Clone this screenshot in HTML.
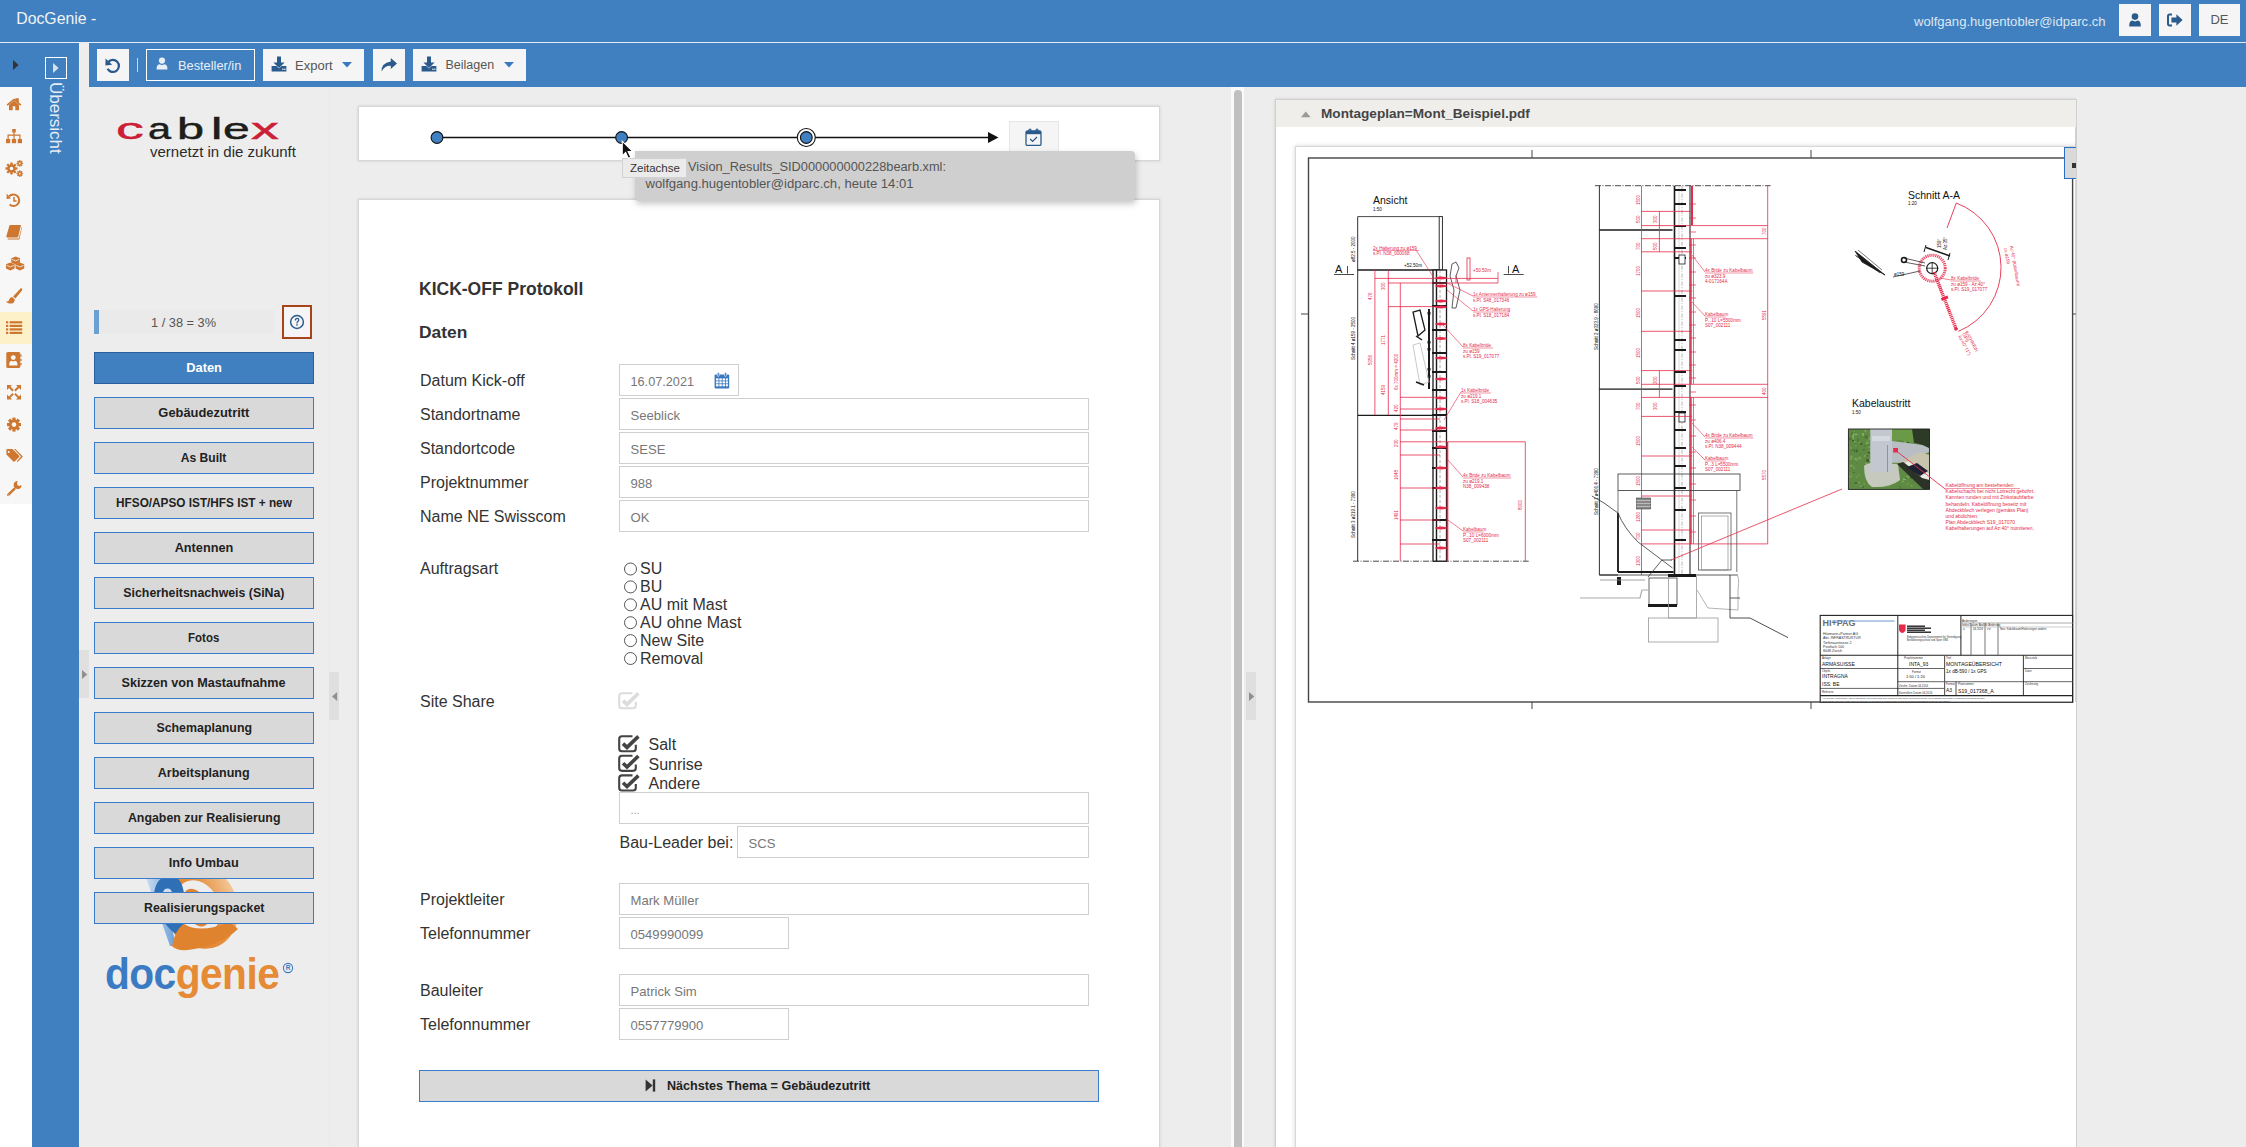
<!DOCTYPE html>
<html><head><meta charset="utf-8">
<style>
*{box-sizing:border-box;margin:0;padding:0}
html,body{width:2246px;height:1147px;overflow:hidden;background:#ededed;font-family:"Liberation Sans",sans-serif;position:relative}
.a{position:absolute}
.blue{background:#4080c0}
.tb{position:absolute;top:49px;height:32px;background:#f5f5f5}
.navbtn{position:absolute;left:94px;width:220px;height:32px;background:#d9d9d9;border:1px solid #3b7bcc;font-weight:bold;font-size:13px;color:#222;text-align:center;line-height:30px;white-space:nowrap}
.lbl{position:absolute;left:420px;font-size:16px;color:#333;white-space:nowrap;line-height:20px}
.inp{position:absolute;left:619px;width:470px;height:32px;border:1px solid #cfcfcf;background:#fff;font-size:13.1px;color:#777;padding-left:10.5px;line-height:34px;white-space:nowrap}
.ic{position:absolute;left:0;width:32px;height:32px}
.ic svg{position:absolute;left:7px;top:8px}
</style></head><body>

<!-- header -->
<div class="a blue" style="left:0;top:0;width:2246px;height:42px"></div>
<div class="a" style="left:16.2px;top:9px;font-size:15.85px;color:#f2f2f2;white-space:nowrap;line-height:20px">DocGenie -</div>
<div class="a" style="left:1914px;top:12.5px;font-size:13.1px;color:#dce7f2;white-space:nowrap;line-height:18px">wolfgang.hugentobler@idparc.ch</div>
<div class="a" style="left:2119px;top:4px;width:32px;height:32px;background:#f5f5f5"></div>
<div class="a" style="left:2159px;top:4px;width:32px;height:32px;background:#f5f5f5"></div>
<div class="a" style="left:2199px;top:4px;width:41px;height:32px;background:#f5f5f5;font-size:13px;color:#555;text-align:center;line-height:32px">DE</div>
<div class="a" style="left:0;top:42px;width:2246px;height:1px;background:#e3ecf6"></div>

<!-- toolbar row -->
<div class="a blue" style="left:0;top:43px;width:32px;height:44px"></div>
<div class="a blue" style="left:89px;top:43px;width:2157px;height:44px"></div>
<!-- sidebar -->
<div class="a blue" style="left:32px;top:43px;width:47px;height:1104px"></div>
<div class="a" style="left:79px;top:43px;width:1px;height:1104px;background:#f4f1ec"></div>
<!-- icon strip -->
<div class="a" style="left:0;top:87px;width:32px;height:417px;background:#f7f7f7"></div>
<div class="a" style="left:0;top:504px;width:32px;height:643px;background:#fff"></div>
<div class="a" style="left:0;top:312px;width:32px;height:32px;background:#fdf1c9"></div>


<!-- toolbar buttons -->
<div class="tb" style="left:97px;width:32px"></div>
<svg class="a" style="left:104px;top:57px" width="18" height="17" viewBox="0 0 18 17"><path d="M4.2 5.2 A6 6 0 1 1 3.6 11.8" fill="none" stroke="#2b5b8c" stroke-width="2.3"/><path d="M1.6 1.6 L8.2 7.8 L1.4 8.6 Z" fill="#2b5b8c"/></svg>
<div class="a" style="left:137px;top:58px;width:1px;height:14px;background:#c9d9ea"></div>
<div class="a" style="left:146px;top:49px;width:109px;height:32px;border:1px solid #fff"></div>
<svg class="a" style="left:156px;top:57px" width="12" height="13" viewBox="0 0 12 13"><circle cx="6" cy="3.6" r="3.1" fill="#e9eff6"/><path d="M0.6 12.6 Q0.4 7.4 3.4 7.2 Q6 8.6 8.6 7.2 Q11.6 7.4 11.4 12.6 Z" fill="#e9eff6"/></svg>
<div class="a" style="left:178px;top:58px;font-size:12.8px;color:#e9eff6;white-space:nowrap;line-height:15px">Besteller/in</div>

<div class="tb" style="left:263px;width:101px"></div>
<svg class="a" style="left:271px;top:56px" width="16" height="16" viewBox="0 0 16 16"><path d="M6 0.5 H10 V6.5 H13.6 L8 12 L2.4 6.5 H6 Z" fill="#2b5b8c"/><path d="M0.6 10 H5.4 L8 12.6 L10.6 10 H15.4 V15.4 H0.6 Z" fill="#2b5b8c"/><rect x="11.2" y="12.6" width="1.3" height="1.3" fill="#f5f5f5"/><rect x="13.2" y="12.6" width="1.3" height="1.3" fill="#f5f5f5"/></svg>
<div class="a" style="left:295px;top:58px;font-size:13px;color:#555;white-space:nowrap;line-height:15px">Export</div>
<svg class="a" style="left:342px;top:62px" width="10" height="6" viewBox="0 0 10 6"><path d="M0 0 H10 L5 5.6 Z" fill="#3a78c0"/></svg>

<div class="tb" style="left:373px;width:32px"></div>
<svg class="a" style="left:380px;top:57px" width="18" height="16" viewBox="0 0 18 16"><path d="M10.8 1 L17 6.6 L10.8 12 V8.8 Q4.6 8.4 1.6 14.6 Q1 6.2 10.8 4.6 Z" fill="#2b5b8c"/></svg>

<div class="tb" style="left:413px;width:113px"></div>
<svg class="a" style="left:421px;top:56px" width="16" height="16" viewBox="0 0 16 16"><path d="M6 0.5 H10 V6.5 H13.6 L8 12 L2.4 6.5 H6 Z" fill="#2b5b8c"/><path d="M0.6 10 H5.4 L8 12.6 L10.6 10 H15.4 V15.4 H0.6 Z" fill="#2b5b8c"/><rect x="11.2" y="12.6" width="1.3" height="1.3" fill="#f5f5f5"/><rect x="13.2" y="12.6" width="1.3" height="1.3" fill="#f5f5f5"/></svg>
<div class="a" style="left:445.5px;top:58px;font-size:12.5px;color:#555;white-space:nowrap;line-height:15px">Beilagen</div>
<svg class="a" style="left:504px;top:62px" width="10" height="6" viewBox="0 0 10 6"><path d="M0 0 H10 L5 5.6 Z" fill="#3a78c0"/></svg>

<!-- header icons -->
<svg class="a" style="left:2129px;top:13px" width="12" height="14" viewBox="0 0 12 14"><circle cx="6" cy="3.6" r="3.3" fill="#2b5b8c"/><path d="M0.2 13.6 Q0 8 3.2 7.6 Q6 9.2 8.8 7.6 Q12 8 11.8 13.6 Z" fill="#2b5b8c"/></svg>
<svg class="a" style="left:2167px;top:13px" width="16" height="14" viewBox="0 0 16 14"><path d="M5 1.5 H2.6 Q1 1.5 1 3.2 V10.8 Q1 12.5 2.6 12.5 H5" fill="none" stroke="#2b5b8c" stroke-width="2"/><path d="M9.4 1.2 L15.6 7 L9.4 12.8 V9.4 H4.4 V4.6 H9.4 Z" fill="#2b5b8c"/></svg>

<!-- sidebar toggles -->
<svg class="a" style="left:13px;top:60px" width="6" height="10" viewBox="0 0 6 10"><path d="M0 0 L5.6 5 L0 10 Z" fill="#333"/></svg>
<div class="a" style="left:45px;top:57px;width:22px;height:22px;border:1px solid #fff"></div>
<svg class="a" style="left:53px;top:63px" width="6" height="10" viewBox="0 0 6 10"><path d="M0 0 L5.6 5 L0 10 Z" fill="#d3e1ef"/></svg>
<div class="a" style="left:48px;top:82px;width:16px;height:74px"><div style="position:absolute;left:0;top:0;writing-mode:vertical-rl;font-size:17px;color:#e6eef6;line-height:15px;white-space:nowrap">Übersicht</div></div>


<svg class="a" style="left:0;top:87px" width="32" height="420" viewBox="0 87 32 420">
<g fill="#cd7730">
<!-- home -->
<path d="M6.6 104.6 L14 98.4 L15.4 99.6 V98.2 H18.8 V102.4 L21.4 104.6 L20.4 105.8 L14 100.5 L7.6 105.8 Z"/>
<path d="M9 104.8 L14 100.8 L19 104.8 V110.2 H15.3 V106.2 H12.7 V110.2 H9 Z"/>
<!-- sitemap -->
<rect x="12.2" y="129" width="3.6" height="3.4"/>
<rect x="6" y="139" width="4.2" height="4.2"/><rect x="11.9" y="139" width="4.2" height="4.2"/><rect x="17.8" y="139" width="4.2" height="4.2"/>
<path d="M13.4 132 H14.6 V134.6 H20.5 V139 H19.3 V135.8 H14.6 V139 H13.4 V135.8 H8.7 V139 H7.5 V134.6 H13.4 Z"/>
<!-- cogs -->
<g transform="translate(11.5,168.5)"><circle r="4.2"/><g><rect x="-1.2" y="-6" width="2.4" height="12"/><rect x="-6" y="-1.2" width="12" height="2.4"/><rect x="-1.2" y="-6" width="2.4" height="12" transform="rotate(45)"/><rect x="-1.2" y="-6" width="2.4" height="12" transform="rotate(-45)"/></g><circle r="1.8" fill="#f8f8f8"/></g>
<g transform="translate(19.8,163.4)"><circle r="2.2"/><rect x="-0.7" y="-3.3" width="1.4" height="6.6"/><rect x="-3.3" y="-0.7" width="6.6" height="1.4"/><rect x="-0.7" y="-3.3" width="1.4" height="6.6" transform="rotate(45)"/><rect x="-0.7" y="-3.3" width="1.4" height="6.6" transform="rotate(-45)"/><circle r="0.9" fill="#f8f8f8"/></g>
<g transform="translate(19.8,173.6)"><circle r="2.2"/><rect x="-0.7" y="-3.3" width="1.4" height="6.6"/><rect x="-3.3" y="-0.7" width="6.6" height="1.4"/><rect x="-0.7" y="-3.3" width="1.4" height="6.6" transform="rotate(45)"/><rect x="-0.7" y="-3.3" width="1.4" height="6.6" transform="rotate(-45)"/><circle r="0.9" fill="#f8f8f8"/></g>
</g>
<g fill="none" stroke="#cd7730">
<!-- history -->
<path d="M9.2 196.2 A5.8 5.8 0 1 1 9.6 204.6" stroke-width="2"/>
<path d="M14 197 V201 H16.6" stroke-width="1.5"/>
</g>
<g fill="#cd7730">
<path d="M6.6 193.6 L11 198.4 L6.6 199 Z"/>
<!-- book -->
<path d="M9.6 225 H21 L18 237.6 H7.4 Q6 237.6 6.4 236 Z"/>
<path d="M7.6 238.6 H18.8 L21.6 227 L22 227.6 L19.4 239.4 H7.8 Z"/>
<rect x="10.8" y="227.6" width="6" height="0.9" fill="#f8f8f8" transform="skewX(-12)" />
<rect x="10.6" y="229.8" width="6" height="0.9" fill="#f8f8f8" transform="skewX(-12)"/>
<!-- cubes -->
<path d="M11.3 258.2 L15.7 256.4 L20 258.2 V262.6 L15.7 264.4 L11.3 262.6 Z"/>
<path d="M6 264.2 L10.3 262.4 L14.6 264.2 V268.6 L10.3 270.4 L6 268.6 Z"/>
<path d="M15.6 264.2 L19.9 262.4 L24.2 264.2 V268.6 L19.9 270.4 L15.6 268.6 Z"/>
<path d="M12 259.4 L15.7 260.9 L19.3 259.4" fill="none" stroke="#f8f8f8" stroke-width="0.8"/>
<path d="M6.7 265.4 L10.3 266.9 L13.9 265.4" fill="none" stroke="#f8f8f8" stroke-width="0.8"/>
<path d="M16.3 265.4 L19.9 266.9 L23.5 265.4" fill="none" stroke="#f8f8f8" stroke-width="0.8"/>
<!-- paint brush -->
<path d="M21 288 Q23 288.6 22 290.6 L15.4 298.6 L13 296.4 Z"/>
<path d="M12.2 297 L14.8 299.4 Q14.6 303.8 9.6 303.6 Q7.4 303.4 6 301.6 Q8.8 301.8 9.2 299.4 Q9.8 297.4 12.2 297 Z"/>
<!-- list -->
<rect x="6" y="321.2" width="2.2" height="2.2"/><rect x="9.6" y="321.2" width="12.6" height="2.2"/>
<rect x="6" y="324.8" width="2.2" height="2.2"/><rect x="9.6" y="324.8" width="12.6" height="2.2"/>
<rect x="6" y="328.3" width="2.2" height="2.2"/><rect x="9.6" y="328.3" width="12.6" height="2.2"/>
<rect x="6" y="331.8" width="2.2" height="2.2"/><rect x="9.6" y="331.8" width="12.6" height="2.2"/>
<!-- address book -->
<rect x="6.3" y="352" width="14" height="16" rx="1.6"/>
<rect x="20.3" y="354.5" width="1.3" height="2.2"/><rect x="20.3" y="358.8" width="1.3" height="2.2"/><rect x="20.3" y="363" width="1.3" height="2.2"/>
<circle cx="13.3" cy="357.6" r="2.4" fill="#f8f8f8"/>
<path d="M9.2 365.6 Q9 361.2 11.4 360.8 Q13.3 361.8 15.2 360.8 Q17.6 361.2 17.4 365.6 Z" fill="#f8f8f8"/>
<!-- expand -->
<path d="M7 385 H12 L10.4 386.6 L13.8 390 L12.4 391.4 L9 388 L7 390 Z"/>
<path d="M21 385 H16 L17.6 386.6 L14.2 390 L15.6 391.4 L19 388 L21 390 Z"/>
<path d="M7 399.4 H12 L10.4 397.8 L13.8 394.4 L12.4 393 L9 396.4 L7 394.4 Z"/>
<path d="M21 399.4 H16 L17.6 397.8 L14.2 394.4 L15.6 393 L19 396.4 L21 394.4 Z"/>
<!-- cog -->
<g transform="translate(14,424.6)"><circle r="5"/><rect x="-1.6" y="-7" width="3.2" height="14"/><rect x="-7" y="-1.6" width="14" height="3.2"/><rect x="-1.6" y="-7" width="3.2" height="14" transform="rotate(45)"/><rect x="-1.6" y="-7" width="3.2" height="14" transform="rotate(-45)"/><circle r="2.3" fill="#f8f8f8"/></g>
<!-- tags -->
<path d="M7.4 449 H12.4 L19.2 455.8 Q19.8 456.4 19.2 457 L14.6 461.6 Q14 462.2 13.4 461.6 L6.4 454.6 V450 Q6.4 449 7.4 449 Z"/>
<path d="M14 449 H15.4 L22.4 456 Q23 456.6 22.4 457.2 L17.6 462 L16.8 461.2 L21 456.6 Z"/>
<circle cx="8.8" cy="452" r="1" fill="#f8f8f8"/>
<!-- wrench -->
<path d="M7.4 494 L14.2 487.2 L16 489 L9.2 495.8 Q8.3 496.6 7.4 495.8 Q6.6 494.9 7.4 494 Z"/>
<path d="M17.6 481 Q14.2 481.4 13.6 484.4 Q13.4 486.4 15 488 Q16.8 489.4 18.8 489 Q21.6 488.2 21.4 485 L19.2 486 L17.2 485 L17.2 482.8 Z"/>
<circle cx="8.3" cy="494.9" r="0.5" fill="#f8f8f8"/>
</g>
</svg>


<!-- nav panel -->
<div class="a" style="left:329px;top:87px;width:1px;height:1060px;background:#e9e9e9"></div>


<!-- cablex logo -->
<div class="a" style="left:116.0px;top:112px;font-size:30px;line-height:34px;color:#cc2036;transform:scaleX(1.85);transform-origin:0 0;-webkit-text-stroke:0.5px #cc2036">c</div>
<div class="a" style="left:148.0px;top:112px;font-size:30px;line-height:34px;color:#1d1d1b;transform:scaleX(1.38);transform-origin:0 0;-webkit-text-stroke:0.5px #1d1d1b">a</div>
<div class="a" style="left:177.0px;top:112px;font-size:30px;line-height:34px;color:#1d1d1b;transform:scaleX(1.62);transform-origin:0 0;-webkit-text-stroke:0.5px #1d1d1b">b</div>
<div class="a" style="left:211.4px;top:112px;font-size:30px;line-height:34px;color:#1d1d1b;transform:scaleX(1.7);transform-origin:0 0;-webkit-text-stroke:0.5px #1d1d1b">l</div>
<div class="a" style="left:222.6px;top:112px;font-size:30px;line-height:34px;color:#1d1d1b;transform:scaleX(1.6);transform-origin:0 0;-webkit-text-stroke:0.5px #1d1d1b">e</div>
<div class="a" style="left:250.6px;top:112px;font-size:30px;line-height:34px;color:#cc2036;transform:scaleX(1.85);transform-origin:0 0;-webkit-text-stroke:0.5px #cc2036">x</div>
<div class="a" style="left:150px;top:143px;font-size:15px;line-height:17px;color:#2b2b2b;white-space:nowrap">vernetzt in die zukunft</div>

<!-- docgenie logo -->
<svg class="a" style="left:130px;top:860px" width="120" height="100" viewBox="130 860 120 100">
<defs><linearGradient id="og" x1="0" x2="1" y1="0" y2="0"><stop offset="0" stop-color="#e0832f"/><stop offset="0.6" stop-color="#e58f3e"/><stop offset="1" stop-color="#f3c796"/></linearGradient>
<linearGradient id="lb" x1="0" x2="1"><stop offset="0" stop-color="#cfe0f3"/><stop offset="1" stop-color="#6a9fd8"/></linearGradient></defs>
<g transform="rotate(-25 200 906)">
<ellipse cx="200" cy="906" rx="37" ry="44" fill="url(#og)"/>
<ellipse cx="197" cy="906" rx="22" ry="28" fill="#eeeeee"/>
<ellipse cx="196" cy="906" rx="12" ry="20" fill="#e0832f"/>
</g>
<path d="M144 872 L160 872 L176 946 L170 946 Z" fill="url(#lb)"/>
<path d="M154 894 Q156 876 170 876 Q182 876 184 894 L184 924 L176 934 Q164 926 160 912 Z" fill="#2f6fb5"/>
<circle cx="167.5" cy="893" r="4.5" fill="#cfe0f3"/>
<path d="M172 946 Q176 928 184 924 Q200 934 230 922 L238 929 Q220 946 188 950 Q176 951 172 946 Z" fill="#e0832f"/>
</svg>
<div class="a" style="left:104.5px;top:948.5px;font-size:44px;line-height:50px;font-weight:bold;white-space:nowrap;transform:scaleX(0.925);transform-origin:0 0;letter-spacing:-0.6px"><span style="color:#3a7bc4">doc</span><span style="color:#e58a35">genie</span></div>
<svg class="a" style="left:282px;top:962px" width="12" height="12" viewBox="0 0 12 12"><circle cx="6" cy="6" r="4.6" fill="none" stroke="#3a7bc4" stroke-width="1.1"/><text x="6" y="8.3" font-size="6.5" font-family="Liberation Sans" font-weight="bold" text-anchor="middle" fill="#3a7bc4">R</text></svg>

<!-- progress -->
<div class="a" style="left:94px;top:310px;width:180px;height:24px;background:#eaeaea"></div>
<div class="a" style="left:94px;top:310px;width:5px;height:24px;background:#6aa0d2"></div>
<div class="a" style="left:151px;top:315px;font-size:12.8px;line-height:16px;color:#555;white-space:nowrap">1 / 38 = 3%</div>
<div class="a" style="left:282px;top:305px;width:30px;height:34px;border:2px solid #a8441a;background:#f5f5f5"></div>
<svg class="a" style="left:289px;top:314px" width="16" height="16" viewBox="0 0 16 16"><circle cx="8" cy="8" r="6.4" fill="none" stroke="#2b5b8c" stroke-width="1.5"/><path d="M5.8 6.4 Q5.8 3.8 8.1 3.8 Q10.4 3.8 10.4 6 Q10.4 7.3 9 8 Q8.6 8.3 8.6 9.4 H7.4 Q7.3 7.6 8.4 7 Q9.2 6.5 9.1 5.9 Q9 5 8 5 Q7.1 5 7.1 6.4 Z" fill="#2b5b8c"/><rect x="7.3" y="10.2" width="1.4" height="1.5" fill="#2b5b8c"/></svg>

<!-- nav buttons -->
<div class="navbtn" style="top:352px;background:#4080c0;border-color:#2a5f9c;color:#fff"><span style="display:inline-block;transform:scaleX(0.986)">Daten</span></div>
<div class="navbtn" style="top:397px"><span style="display:inline-block;transform:scaleX(0.992)">Gebäudezutritt</span></div>
<div class="navbtn" style="top:442px"><span style="display:inline-block;transform:scaleX(0.93)">As Built</span></div>
<div class="navbtn" style="top:487px"><span style="display:inline-block;transform:scaleX(0.906)">HFSO/APSO IST/HFS IST + new</span></div>
<div class="navbtn" style="top:532px"><span style="display:inline-block;transform:scaleX(0.978)">Antennen</span></div>
<div class="navbtn" style="top:577px"><span style="display:inline-block;transform:scaleX(0.949)">Sicherheitsnachweis (SiNa)</span></div>
<div class="navbtn" style="top:622px"><span style="display:inline-block;transform:scaleX(0.88)">Fotos</span></div>
<div class="navbtn" style="top:667px"><span style="display:inline-block;transform:scaleX(0.97)">Skizzen von Mastaufnahme</span></div>
<div class="navbtn" style="top:712px"><span style="display:inline-block;transform:scaleX(0.952)">Schemaplanung</span></div>
<div class="navbtn" style="top:757px"><span style="display:inline-block;transform:scaleX(0.964)">Arbeitsplanung</span></div>
<div class="navbtn" style="top:802px"><span style="display:inline-block;transform:scaleX(0.951)">Angaben zur Realisierung</span></div>
<div class="navbtn" style="top:847px"><span style="display:inline-block;transform:scaleX(0.978)">Info Umbau</span></div>
<div class="navbtn" style="top:892px"><span style="display:inline-block;transform:scaleX(0.952)">Realisierungspacket</span></div>


<!-- toggle tabs -->
<div class="a" style="left:79px;top:650px;width:10px;height:48px;background:#e0e0e0"></div>
<svg class="a" style="left:82px;top:670px" width="6" height="9" viewBox="0 0 6 9"><path d="M0 0 L5.2 4.5 L0 9 Z" fill="#8f8f8f"/></svg>
<div class="a" style="left:329px;top:672px;width:10px;height:48px;background:#dfdfdf"></div>
<svg class="a" style="left:332px;top:692px" width="6" height="9" viewBox="0 0 6 9"><path d="M5.2 0 L0 4.5 L5.2 9 Z" fill="#8f8f8f"/></svg>
<div class="a" style="left:1246px;top:672px;width:10px;height:48px;background:#dfdfdf"></div>
<svg class="a" style="left:1249px;top:692px" width="6" height="9" viewBox="0 0 6 9"><path d="M0 0 L5.2 4.5 L0 9 Z" fill="#8f8f8f"/></svg>

<!-- doc cards -->
<div class="a" style="left:358px;top:106px;width:802px;height:55px;background:#fff;border:1px solid #d6d6d6;box-shadow:0 0 3px rgba(0,0,0,.12)"></div>
<div class="a" style="left:358px;top:199px;width:802px;height:960px;background:#fff;border:1px solid #d6d6d6;box-shadow:0 0 3px rgba(0,0,0,.12)"></div>


<!-- timeline -->
<svg class="a" style="left:420px;top:120px" width="600" height="36" viewBox="420 120 600 36">
<line x1="437" y1="137.5" x2="990" y2="137.5" stroke="#111" stroke-width="1.3"/>
<path d="M988 132 L998.5 137.5 L988 143 Z" fill="#111"/>
<circle cx="437" cy="137.5" r="5.9" fill="#4080c0" stroke="#111" stroke-width="1.1"/>
<circle cx="621.6" cy="137.5" r="5.9" fill="#4080c0" stroke="#111" stroke-width="1.1"/>
<circle cx="806.3" cy="137.5" r="9" fill="#fff" stroke="#111" stroke-width="1.1"/>
<circle cx="806.3" cy="137.5" r="5.9" fill="#4080c0" stroke="#111" stroke-width="1.1"/>
</svg>
<div class="a" style="left:1009px;top:121px;width:50px;height:34px;background:#f5f5f5;border:1px solid #e6e6e6"></div>
<svg class="a" style="left:1025px;top:128px" width="17" height="18" viewBox="0 0 17 18"><path d="M2.5 3 H14.5 Q16 3 16 4.5 V16 Q16 17.5 14.5 17.5 H2.5 Q1 17.5 1 16 V4.5 Q1 3 2.5 3 Z" fill="none" stroke="#2b5b8c" stroke-width="1.3"/><rect x="1" y="3" width="15" height="3.2" fill="#2b5b8c"/><rect x="4" y="1" width="2" height="4" rx="1" fill="none" stroke="#2b5b8c" stroke-width="1.1"/><rect x="11" y="1" width="2" height="4" rx="1" fill="none" stroke="#2b5b8c" stroke-width="1.1"/><path d="M5.2 11 L7.6 13.4 L12 9" fill="none" stroke="#2b5b8c" stroke-width="1.3"/></svg>

<!-- tooltip -->
<div class="a" style="left:635px;top:151px;width:500px;height:50px;background:#cfcfcf;border-radius:0 4px 4px 4px;box-shadow:1px 3px 6px rgba(0,0,0,.22)"></div>
<div class="a" style="left:688px;top:158px;font-size:12.8px;line-height:17px;color:#555;white-space:nowrap">Vision_Results_SID000000000228bearb.xml:</div><div class="a" style="left:645.5px;top:175px;font-size:13.1px;line-height:17px;color:#555;white-space:nowrap">wolfgang.hugentobler@idparc.ch, heute 14:01</div>
<div class="a" style="left:622px;top:158px;width:65px;height:20px;background:#ebebeb;border:1px solid #d2d2d2;font-size:11.5px;line-height:18px;color:#333;padding-left:7px;white-space:nowrap">Zeitachse</div>
<svg class="a" style="left:618px;top:138px" width="17" height="22" viewBox="0 0 14 18"><path d="M3.5 2.6 V14.6 L6.3 11.9 L8.5 16.6 L10.5 15.7 L8.3 11.1 L12.2 11.1 Z" fill="#111" stroke="#fff" stroke-width="0.9"/></svg>

<!-- form -->
<div class="a" style="left:419px;top:276.5px;font-size:17.5px;font-weight:bold;color:#333;line-height:24px;white-space:nowrap">KICK-OFF Protokoll</div>
<div class="a" style="left:419px;top:320px;font-size:17.4px;font-weight:bold;color:#333;line-height:24px;white-space:nowrap">Daten</div>

<div class="lbl" style="top:371px">Datum Kick-off</div>
<div class="inp" style="top:364px;width:120px;font-size:12.7px">16.07.2021</div>
<svg class="a" style="left:714px;top:372px" width="16" height="17" viewBox="0 0 16 17"><rect x="0.6" y="2.6" width="14.6" height="13.8" rx="1" fill="#3a78c0"/><g fill="#fff"><rect x="2" y="6.4" width="2.5" height="2.1"/><rect x="5.3" y="6.4" width="2.5" height="2.1"/><rect x="8.6" y="6.4" width="2.5" height="2.1"/><rect x="11.9" y="6.4" width="2" height="2.1"/><rect x="2" y="9.3" width="2.5" height="2.1"/><rect x="5.3" y="9.3" width="2.5" height="2.1"/><rect x="8.6" y="9.3" width="2.5" height="2.1"/><rect x="11.9" y="9.3" width="2" height="2.1"/><rect x="2" y="12.2" width="2.5" height="2.1"/><rect x="5.3" y="12.2" width="2.5" height="2.1"/><rect x="8.6" y="12.2" width="2.5" height="2.1"/><rect x="11.9" y="12.2" width="2" height="2.1"/></g><rect x="3.4" y="0.4" width="1.8" height="4" rx="0.9" fill="#3a78c0" stroke="#fff" stroke-width="0.6"/><rect x="10.6" y="0.4" width="1.8" height="4" rx="0.9" fill="#3a78c0" stroke="#fff" stroke-width="0.6"/></svg>

<div class="lbl" style="top:405px">Standortname</div>
<div class="inp" style="top:398px">Seeblick</div>
<div class="lbl" style="top:439px">Standortcode</div>
<div class="inp" style="top:432px">SESE</div>
<div class="lbl" style="top:473px">Projektnummer</div>
<div class="inp" style="top:466px">988</div>
<div class="lbl" style="top:507px">Name NE Swisscom</div>
<div class="inp" style="top:500px">OK</div>

<div class="lbl" style="top:559px">Auftragsart</div>
<div class="a" style="left:640px;top:560px;font-size:16px;line-height:17.9px;color:#333;white-space:nowrap">SU<br>BU<br>AU mit Mast<br>AU ohne Mast<br>New Site<br>Removal</div>
<svg class="a" style="left:622px;top:560px" width="17" height="108" viewBox="622 560 17 108">
<g fill="#fff" stroke="#555" stroke-width="1">
<circle cx="630.5" cy="569" r="6"/><circle cx="630.5" cy="586.9" r="6"/><circle cx="630.5" cy="604.8" r="6"/><circle cx="630.5" cy="622.7" r="6"/><circle cx="630.5" cy="640.6" r="6"/><circle cx="630.5" cy="658.5" r="6"/>
</g></svg>

<div class="lbl" style="top:692px">Site Share</div>
<svg class="a" style="left:617px;top:690px" width="26" height="21" viewBox="0 0 26 21"><g fill="none" stroke="#dcdcdc"><path d="M15.5 3.2 H5 Q2.2 3.2 2.2 6 V15.5 Q2.2 18.3 5 18.3 H16 Q18.8 18.3 18.8 15.5 V11.8" stroke-width="2.1"/><path d="M6 10.6 L10 14.4 L21.4 3.4" stroke-width="3.6"/></g></svg>

<svg class="a" style="left:617px;top:733px" width="26" height="60" viewBox="0 0 26 60"><g fill="none" stroke="#444"><g transform="translate(0,0)"><path d="M15.5 3.2 H5 Q2.2 3.2 2.2 6 V15.5 Q2.2 18.3 5 18.3 H16 Q18.8 18.3 18.8 15.5 V11.8" stroke-width="2.1"/><path d="M6 10.6 L10 14.4 L21.4 3.4" stroke-width="3.6"/></g><g transform="translate(0,19.6)"><path d="M15.5 3.2 H5 Q2.2 3.2 2.2 6 V15.5 Q2.2 18.3 5 18.3 H16 Q18.8 18.3 18.8 15.5 V11.8" stroke-width="2.1"/><path d="M6 10.6 L10 14.4 L21.4 3.4" stroke-width="3.6"/></g><g transform="translate(0,39.2)"><path d="M15.5 3.2 H5 Q2.2 3.2 2.2 6 V15.5 Q2.2 18.3 5 18.3 H16 Q18.8 18.3 18.8 15.5 V11.8" stroke-width="2.1"/><path d="M6 10.6 L10 14.4 L21.4 3.4" stroke-width="3.6"/></g></g></svg>
<div class="a" style="left:648.5px;top:735px;font-size:16px;line-height:19.5px;color:#333;white-space:nowrap">Salt<br>Sunrise<br>Andere</div>
<div class="inp" style="top:792px;height:32px;font-size:11px;color:#999">...</div>
<div class="a" style="left:619.5px;top:834px;font-size:16px;line-height:18px;color:#333;white-space:nowrap">Bau-Leader bei:</div>
<div class="inp" style="left:737px;top:826px;width:352px">SCS</div>

<div class="lbl" style="top:890px">Projektleiter</div>
<div class="inp" style="top:883px">Mark Müller</div>
<div class="lbl" style="top:924px">Telefonnummer</div>
<div class="inp" style="top:917px;width:170px">0549990099</div>
<div class="lbl" style="top:981px">Bauleiter</div>
<div class="inp" style="top:974px">Patrick Sim</div>
<div class="lbl" style="top:1015px">Telefonnummer</div>
<div class="inp" style="top:1008px;width:170px">0557779900</div>

<div class="a" style="left:419px;top:1070px;width:680px;height:32px;background:#d9d9d9;border:1px solid #3b7bcc"></div>
<svg class="a" style="left:645px;top:1079px" width="11" height="13" viewBox="0 0 11 13"><path d="M0.6 0.4 L7.6 6.5 L0.6 12.6 Z" fill="#333"/><rect x="7.8" y="0.4" width="2.4" height="12.2" fill="#333"/></svg>
<div class="a" style="left:667px;top:1078px;font-size:12.6px;font-weight:bold;color:#222;line-height:16px;white-space:nowrap">Nächstes Thema = Gebäudezutritt</div>

<!-- splitter -->
<div class="a" style="left:1231px;top:87px;width:13px;height:1060px;background:#fafafa"></div>
<div class="a" style="left:1234px;top:90px;width:8px;height:1057px;background:#c0c0c0;border-radius:4px 4px 0 0"></div>

<!-- pdf panel -->
<div class="a" style="left:1275px;top:99px;width:801px;height:1060px;background:#fff;border:1px solid #d0d0d0;box-shadow:0 0 3px rgba(0,0,0,.15)"></div>
<div class="a" style="left:1276px;top:100px;width:800px;height:27px;background:#efeeea"></div>


<div class="a" style="left:1321px;top:105px;font-size:13.6px;font-weight:bold;color:#444;line-height:18px;white-space:nowrap">Montageplan=Mont_Beispiel.pdf</div>
<svg class="a" style="left:1301px;top:111px" width="10" height="7" viewBox="0 0 10 7"><path d="M0 6.2 L4.8 0.6 L9.6 6.2 Z" fill="#999"/></svg>
<!-- pdf page -->
<div class="a" style="left:1295px;top:146px;width:790px;height:1010px;background:#fff;border:1px solid #d8d8d8;box-shadow:0 0 4px rgba(0,0,0,.18)"></div>
<svg class="a" style="left:1296px;top:146px" width="780" height="1001" viewBox="1296 146 780 1001" font-family="Liberation Sans">
<rect x="1308.5" y="158" width="764.1" height="544" fill="none" stroke="#444" stroke-width="1.4" />
<line x1="1532" y1="150" x2="1532" y2="158" stroke="#444" stroke-width="1" />
<line x1="1532" y1="702" x2="1532" y2="709" stroke="#444" stroke-width="1" />
<line x1="1811" y1="150" x2="1811" y2="158" stroke="#444" stroke-width="1" />
<line x1="1811" y1="702" x2="1811" y2="709" stroke="#444" stroke-width="1" />
<line x1="1301" y1="314" x2="1308.5" y2="314" stroke="#444" stroke-width="1" />
<line x1="2072.6" y1="314" x2="2076" y2="314" stroke="#444" stroke-width="1" />
<line x1="2076" y1="180" x2="2076" y2="702" stroke="#999" stroke-width="0.8" />
<text x="1373" y="204" font-size="10.5" fill="#111" >Ansicht</text>
<text x="1373" y="211" font-size="4.5" fill="#111" >1:50</text>
<line x1="1357.7" y1="216.6" x2="1439" y2="216.6" stroke="#1a1a1a" stroke-width="0.8" />
<line x1="1357.7" y1="216.6" x2="1357.7" y2="561" stroke="#1a1a1a" stroke-width="0.9" />
<line x1="1357.7" y1="270" x2="1439" y2="270" stroke="#1a1a1a" stroke-width="1.6" />
<line x1="1357.7" y1="415.3" x2="1433.8" y2="415.3" stroke="#1a1a1a" stroke-width="1.2" />
<line x1="1353" y1="561.2" x2="1528.7" y2="561.2" stroke="#1a1a1a" stroke-width="0.8" stroke-dasharray="6 1.5 1 1.5"/>
<text x="1335" y="273" font-size="11" fill="#111" >A</text>
<line x1="1334" y1="274.5" x2="1354" y2="274.5" stroke="#1a1a1a" stroke-width="0.8" />
<line x1="1347.5" y1="266" x2="1347.5" y2="273.5" stroke="#1a1a1a" stroke-width="0.8" />
<text x="1512" y="273" font-size="11" fill="#111" >A</text>
<line x1="1503.7" y1="274.5" x2="1523.7" y2="274.5" stroke="#1a1a1a" stroke-width="0.8" />
<line x1="1508.5" y1="266" x2="1508.5" y2="273.5" stroke="#1a1a1a" stroke-width="0.8" />
<rect x="1439.2" y="216.6" width="3.2" height="53.4" fill="#fff" stroke="#1a1a1a" stroke-width="0.9" />
<rect x="1433" y="270" width="13.5" height="291.2" fill="#fff" stroke="#1a1a1a" stroke-width="1.3" />
<line x1="1436.5" y1="270" x2="1436.5" y2="561" stroke="#1a1a1a" stroke-width="1.4" />
<line x1="1440" y1="270" x2="1440" y2="561" stroke="#555" stroke-width="0.5" stroke-dasharray="3 2"/>
<rect x="1432" y="282" width="14" height="2" fill="#1a1a1a" stroke="none" stroke-width="0" />
<rect x="1432" y="305" width="14" height="2" fill="#1a1a1a" stroke="none" stroke-width="0" />
<rect x="1432" y="329" width="14" height="2" fill="#1a1a1a" stroke="none" stroke-width="0" />
<rect x="1432" y="352" width="14" height="2" fill="#1a1a1a" stroke="none" stroke-width="0" />
<rect x="1432" y="371" width="14" height="2" fill="#1a1a1a" stroke="none" stroke-width="0" />
<rect x="1432" y="389" width="14" height="2" fill="#1a1a1a" stroke="none" stroke-width="0" />
<rect x="1432" y="414" width="14" height="2" fill="#1a1a1a" stroke="none" stroke-width="0" />
<rect x="1432" y="430" width="14" height="2" fill="#1a1a1a" stroke="none" stroke-width="0" />
<rect x="1432" y="447" width="14" height="2" fill="#1a1a1a" stroke="none" stroke-width="0" />
<rect x="1432" y="467" width="14" height="2" fill="#1a1a1a" stroke="none" stroke-width="0" />
<rect x="1432" y="487" width="14" height="2" fill="#1a1a1a" stroke="none" stroke-width="0" />
<rect x="1432" y="519" width="14" height="2" fill="#1a1a1a" stroke="none" stroke-width="0" />
<rect x="1432" y="539" width="14" height="2" fill="#1a1a1a" stroke="none" stroke-width="0" />
<ellipse cx="1441" cy="278" rx="6" ry="1.4" fill="#e62a4a"/>
<ellipse cx="1441" cy="286" rx="6" ry="1.4" fill="#e62a4a"/>
<ellipse cx="1441" cy="301" rx="6" ry="1.4" fill="#e62a4a"/>
<ellipse cx="1441" cy="307" rx="6" ry="1.4" fill="#e62a4a"/>
<ellipse cx="1441" cy="324" rx="6" ry="1.4" fill="#e62a4a"/>
<ellipse cx="1441" cy="338.5" rx="6" ry="1.4" fill="#e62a4a"/>
<ellipse cx="1441" cy="358" rx="6" ry="1.4" fill="#e62a4a"/>
<ellipse cx="1441" cy="379" rx="6" ry="1.4" fill="#e62a4a"/>
<ellipse cx="1441" cy="398" rx="6" ry="1.4" fill="#e62a4a"/>
<ellipse cx="1441" cy="409" rx="6" ry="1.4" fill="#e62a4a"/>
<ellipse cx="1441" cy="428" rx="6" ry="1.4" fill="#e62a4a"/>
<ellipse cx="1441" cy="447" rx="6" ry="1.4" fill="#e62a4a"/>
<ellipse cx="1441" cy="468" rx="6" ry="1.4" fill="#e62a4a"/>
<ellipse cx="1441" cy="488" rx="6" ry="1.4" fill="#e62a4a"/>
<ellipse cx="1441" cy="508" rx="6" ry="1.4" fill="#e62a4a"/>
<ellipse cx="1441" cy="528" rx="6" ry="1.4" fill="#e62a4a"/>
<ellipse cx="1441" cy="548" rx="6" ry="1.4" fill="#e62a4a"/>
<line x1="1447.5" y1="442" x2="1447.5" y2="561" stroke="#e62a4a" stroke-width="1.6" />
<path d="M1413 312 L1420 310 L1425 330 L1418 336 Z" fill="#fff" stroke="#1a1a1a" stroke-width="1.3"/>
<line x1="1429" y1="309" x2="1429" y2="389" stroke="#1a1a1a" stroke-width="2" />
<rect x="1427.5" y="312" width="3" height="2.5" fill="#1a1a1a" stroke="none" stroke-width="0" />
<rect x="1427.5" y="341" width="3" height="2.5" fill="#1a1a1a" stroke="none" stroke-width="0" />
<rect x="1427.5" y="348" width="3" height="2.5" fill="#1a1a1a" stroke="none" stroke-width="0" />
<rect x="1427.5" y="368" width="3" height="2.5" fill="#1a1a1a" stroke="none" stroke-width="0" />
<rect x="1427.5" y="375" width="3" height="2.5" fill="#1a1a1a" stroke="none" stroke-width="0" />
<path d="M1413 345 L1420 343 L1429 382 L1420 385 Z" fill="none" stroke="#bbb" stroke-width="0.8"/>
<line x1="1416" y1="336" x2="1422" y2="340" stroke="#1a1a1a" stroke-width="1.5" />
<line x1="1416" y1="382" x2="1424" y2="385" stroke="#1a1a1a" stroke-width="1.5" />
<path d="M1452 264 L1456 262 L1459 268 L1456 276 L1460 290 L1456 308 L1452 308 L1454 290 L1450 276 Z" fill="#fff" stroke="#333" stroke-width="0.8"/>
<rect x="1467" y="258" width="3" height="22" fill="#fff" stroke="#e62a4a" stroke-width="0.8" />
<line x1="1374.9" y1="270" x2="1374.9" y2="415" stroke="#e62a4a" stroke-width="0.8" />
<line x1="1388.3" y1="270" x2="1388.3" y2="415" stroke="#e62a4a" stroke-width="0.8" />
<line x1="1400.3" y1="283" x2="1400.3" y2="561" stroke="#e62a4a" stroke-width="0.8" />
<line x1="1456" y1="275" x2="1456" y2="283" stroke="#e62a4a" stroke-width="0.7" />
<line x1="1498" y1="272" x2="1498" y2="283" stroke="#e62a4a" stroke-width="0.7" />
<line x1="1374.9" y1="278.4" x2="1498" y2="278.4" stroke="#e62a4a" stroke-width="0.8" />
<line x1="1388" y1="283" x2="1498" y2="283" stroke="#e62a4a" stroke-width="0.8" />
<line x1="1388" y1="306.6" x2="1440" y2="306.6" stroke="#e62a4a" stroke-width="0.8" />
<line x1="1400" y1="397.3" x2="1440" y2="397.3" stroke="#e62a4a" stroke-width="0.8" />
<line x1="1400" y1="409" x2="1440" y2="409" stroke="#e62a4a" stroke-width="0.8" />
<line x1="1400" y1="419" x2="1440" y2="419" stroke="#e62a4a" stroke-width="0.8" />
<line x1="1400" y1="430" x2="1440" y2="430" stroke="#e62a4a" stroke-width="0.8" />
<line x1="1400" y1="441.8" x2="1525.3" y2="441.8" stroke="#e62a4a" stroke-width="0.8" />
<line x1="1400" y1="455" x2="1440" y2="455" stroke="#e62a4a" stroke-width="0.8" />
<line x1="1400" y1="488" x2="1440" y2="488" stroke="#e62a4a" stroke-width="0.8" />
<line x1="1400" y1="520" x2="1440" y2="520" stroke="#e62a4a" stroke-width="0.8" />
<line x1="1400" y1="544" x2="1440" y2="544" stroke="#e62a4a" stroke-width="0.8" />
<line x1="1525.3" y1="441.8" x2="1525.3" y2="561.2" stroke="#e62a4a" stroke-width="0.8" />
<text x="1372" y="300" font-size="4.5" fill="#e62a4a" transform="rotate(-90 1372 300)">476</text>
<text x="1385" y="290" font-size="4.5" fill="#e62a4a" transform="rotate(-90 1385 290)">300</text>
<text x="1385" y="345" font-size="4.5" fill="#e62a4a" transform="rotate(-90 1385 345)">1771</text>
<text x="1372" y="365" font-size="4.5" fill="#e62a4a" transform="rotate(-90 1372 365)">5056</text>
<text x="1385" y="395" font-size="4.5" fill="#e62a4a" transform="rotate(-90 1385 395)">4159</text>
<text x="1398" y="390" font-size="4.5" fill="#e62a4a" transform="rotate(-90 1398 390)">6x 700mm = 4200</text>
<text x="1398" y="412" font-size="4.5" fill="#e62a4a" transform="rotate(-90 1398 412)">420</text>
<text x="1398" y="430" font-size="4.5" fill="#e62a4a" transform="rotate(-90 1398 430)">479</text>
<text x="1398" y="447" font-size="4.5" fill="#e62a4a" transform="rotate(-90 1398 447)">230</text>
<text x="1398" y="480" font-size="4.5" fill="#e62a4a" transform="rotate(-90 1398 480)">1648</text>
<text x="1398" y="520" font-size="4.5" fill="#e62a4a" transform="rotate(-90 1398 520)">1491</text>
<text x="1522" y="510" font-size="4.5" fill="#e62a4a" transform="rotate(-90 1522 510)">8000</text>
<text x="1355" y="262" font-size="4.5" fill="#111" transform="rotate(-90 1355 262)">ø82.5 - 2000</text>
<text x="1355" y="360" font-size="4.5" fill="#111" transform="rotate(-90 1355 360)">Schnitt 4 ø159 - 2500</text>
<text x="1355" y="538" font-size="4.5" fill="#111" transform="rotate(-90 1355 538)">Schnitt 3 ø219.1 - 7390</text>
<text x="1373" y="249.5" font-size="4.6" fill="#e62a4a" >2x Halterung zu ø159</text>
<text x="1373" y="255.1" font-size="4.6" fill="#e62a4a" >s.Pl. N38_000068</text>
<line x1="1373" y1="250.5" x2="1419.0" y2="250.5" stroke="#e62a4a" stroke-width="0.5" />
<line x1="1416" y1="250" x2="1434" y2="278" stroke="#e62a4a" stroke-width="0.6" />
<text x="1473" y="296.0" font-size="4.6" fill="#e62a4a" >1x Antennenhalterung zu ø159</text>
<text x="1473" y="301.6" font-size="4.6" fill="#e62a4a" >s.Pl. S48_017346</text>
<line x1="1473" y1="297" x2="1537.4" y2="297" stroke="#e62a4a" stroke-width="0.5" />
<line x1="1447" y1="283" x2="1473" y2="296" stroke="#e62a4a" stroke-width="0.6" />
<text x="1473" y="311.0" font-size="4.6" fill="#e62a4a" >1x GPS-Halterung</text>
<text x="1473" y="316.6" font-size="4.6" fill="#e62a4a" >s.Pl. S18_017184</text>
<line x1="1473" y1="312" x2="1509.8" y2="312" stroke="#e62a4a" stroke-width="0.5" />
<line x1="1447" y1="290" x2="1473" y2="311" stroke="#e62a4a" stroke-width="0.6" />
<text x="1463" y="347.0" font-size="4.6" fill="#e62a4a" >8x Kabelbride</text>
<text x="1463" y="352.6" font-size="4.6" fill="#e62a4a" >zu ø159</text>
<text x="1463" y="358.2" font-size="4.6" fill="#e62a4a" >s.Pl. S19_017077</text>
<line x1="1463" y1="348" x2="1492.9" y2="348" stroke="#e62a4a" stroke-width="0.5" />
<line x1="1443" y1="325" x2="1463" y2="347" stroke="#e62a4a" stroke-width="0.6" />
<text x="1461" y="392.0" font-size="4.6" fill="#e62a4a" >1x Kabelbride</text>
<text x="1461" y="397.6" font-size="4.6" fill="#e62a4a" >zu ø219.1</text>
<text x="1461" y="403.2" font-size="4.6" fill="#e62a4a" >s.Pl. S18_004635</text>
<line x1="1461" y1="393" x2="1490.9" y2="393" stroke="#e62a4a" stroke-width="0.5" />
<line x1="1444" y1="420" x2="1461" y2="392" stroke="#e62a4a" stroke-width="0.6" />
<text x="1404" y="267" font-size="4.6" fill="#111" >+52.50m</text>
<text x="1473" y="272" font-size="4.6" fill="#e62a4a" >+50.50m</text>
<text x="1463" y="477.0" font-size="4.6" fill="#e62a4a" >4x Bride zu Kabelbaum</text>
<text x="1463" y="482.6" font-size="4.6" fill="#e62a4a" >zu ø219.1</text>
<text x="1463" y="488.2" font-size="4.6" fill="#e62a4a" >N38_009438</text>
<line x1="1463" y1="478" x2="1511.3" y2="478" stroke="#e62a4a" stroke-width="0.5" />
<line x1="1448" y1="460" x2="1463" y2="477" stroke="#e62a4a" stroke-width="0.6" />
<text x="1463" y="531.0" font-size="4.6" fill="#e62a4a" >Kabelbaum</text>
<text x="1463" y="536.6" font-size="4.6" fill="#e62a4a" >P...10 L=6000mm</text>
<text x="1463" y="542.2" font-size="4.6" fill="#e62a4a" >S07_002111</text>
<line x1="1463" y1="532" x2="1483.7" y2="532" stroke="#e62a4a" stroke-width="0.5" />
<line x1="1448" y1="520" x2="1463" y2="531" stroke="#e62a4a" stroke-width="0.6" />
<line x1="1595" y1="185.7" x2="1770.6" y2="185.7" stroke="#1a1a1a" stroke-width="0.8" stroke-dasharray="6 1.5 1 1.5"/>
<line x1="1599.4" y1="185.7" x2="1599.4" y2="575" stroke="#1a1a1a" stroke-width="0.9" />
<line x1="1599.4" y1="230" x2="1672.5" y2="230" stroke="#1a1a1a" stroke-width="1.3" />
<line x1="1599.4" y1="389.1" x2="1672.5" y2="389.1" stroke="#1a1a1a" stroke-width="1.3" />
<line x1="1599.4" y1="575" x2="1618" y2="575" stroke="#1a1a1a" stroke-width="1" />
<line x1="1674.5" y1="185.7" x2="1674.5" y2="575" stroke="#1a1a1a" stroke-width="1.6" />
<line x1="1690" y1="185.7" x2="1690" y2="575" stroke="#1a1a1a" stroke-width="1" />
<line x1="1682" y1="185.7" x2="1682" y2="575" stroke="#666" stroke-width="0.5" stroke-dasharray="4 1.5 1 1.5"/>
<line x1="1679" y1="185.7" x2="1679" y2="575" stroke="#999" stroke-width="0.4" />
<rect x="1674" y="189" width="12" height="2" fill="#1a1a1a" stroke="none" stroke-width="0" />
<rect x="1674" y="203" width="12" height="2" fill="#1a1a1a" stroke="none" stroke-width="0" />
<rect x="1674" y="225" width="12" height="2" fill="#1a1a1a" stroke="none" stroke-width="0" />
<rect x="1674" y="247" width="12" height="2" fill="#1a1a1a" stroke="none" stroke-width="0" />
<rect x="1674" y="257" width="12" height="2" fill="#1a1a1a" stroke="none" stroke-width="0" />
<rect x="1674" y="295" width="12" height="2" fill="#1a1a1a" stroke="none" stroke-width="0" />
<rect x="1674" y="339" width="12" height="2" fill="#1a1a1a" stroke="none" stroke-width="0" />
<rect x="1674" y="349" width="12" height="2" fill="#1a1a1a" stroke="none" stroke-width="0" />
<rect x="1674" y="371" width="12" height="2" fill="#1a1a1a" stroke="none" stroke-width="0" />
<rect x="1674" y="385" width="12" height="2" fill="#1a1a1a" stroke="none" stroke-width="0" />
<rect x="1674" y="411" width="12" height="2" fill="#1a1a1a" stroke="none" stroke-width="0" />
<rect x="1674" y="429" width="12" height="2" fill="#1a1a1a" stroke="none" stroke-width="0" />
<rect x="1674" y="447" width="12" height="2" fill="#1a1a1a" stroke="none" stroke-width="0" />
<rect x="1674" y="465" width="12" height="2" fill="#1a1a1a" stroke="none" stroke-width="0" />
<rect x="1674" y="487" width="12" height="2" fill="#1a1a1a" stroke="none" stroke-width="0" />
<rect x="1674" y="509" width="12" height="2" fill="#1a1a1a" stroke="none" stroke-width="0" />
<rect x="1674" y="539" width="12" height="2" fill="#1a1a1a" stroke="none" stroke-width="0" />
<rect x="1679" y="255" width="6" height="9" fill="#fff" stroke="#1a1a1a" stroke-width="0.8" />
<rect x="1679" y="413" width="6" height="9" fill="#fff" stroke="#1a1a1a" stroke-width="0.8" />
<line x1="1692" y1="185.7" x2="1692" y2="225" stroke="#e62a4a" stroke-width="2" />
<line x1="1691" y1="238.7" x2="1691" y2="384" stroke="#e62a4a" stroke-width="1.4" />
<line x1="1693.5" y1="238.7" x2="1693.5" y2="384" stroke="#e62a4a" stroke-width="0.7" />
<line x1="1691" y1="397" x2="1691" y2="543.9" stroke="#e62a4a" stroke-width="1.4" />
<line x1="1693.5" y1="397" x2="1693.5" y2="543.9" stroke="#e62a4a" stroke-width="0.7" />
<line x1="1641.5" y1="185.7" x2="1641.5" y2="575" stroke="#e62a4a" stroke-width="0.8" />
<line x1="1659.4" y1="211.4" x2="1659.4" y2="251.8" stroke="#e62a4a" stroke-width="0.8" />
<line x1="1659.4" y1="370.6" x2="1659.4" y2="397.4" stroke="#e62a4a" stroke-width="0.8" />
<line x1="1767.7" y1="185.7" x2="1767.7" y2="543.9" stroke="#e62a4a" stroke-width="0.8" />
<line x1="1641.5" y1="211.4" x2="1692" y2="211.4" stroke="#e62a4a" stroke-width="0.8" />
<line x1="1641.5" y1="225.6" x2="1692" y2="225.6" stroke="#e62a4a" stroke-width="0.8" />
<line x1="1641.5" y1="238.7" x2="1692" y2="238.7" stroke="#e62a4a" stroke-width="0.8" />
<line x1="1641.5" y1="251.8" x2="1692" y2="251.8" stroke="#e62a4a" stroke-width="0.8" />
<line x1="1641.5" y1="291" x2="1692" y2="291" stroke="#e62a4a" stroke-width="0.8" />
<line x1="1641.5" y1="331.3" x2="1692" y2="331.3" stroke="#e62a4a" stroke-width="0.8" />
<line x1="1641.5" y1="370.6" x2="1692" y2="370.6" stroke="#e62a4a" stroke-width="0.8" />
<line x1="1641.5" y1="384.3" x2="1692" y2="384.3" stroke="#e62a4a" stroke-width="0.8" />
<line x1="1641.5" y1="397.4" x2="1692" y2="397.4" stroke="#e62a4a" stroke-width="0.8" />
<line x1="1641.5" y1="416.4" x2="1692" y2="416.4" stroke="#e62a4a" stroke-width="0.8" />
<line x1="1641.5" y1="456" x2="1692" y2="456" stroke="#e62a4a" stroke-width="0.8" />
<line x1="1641.5" y1="496" x2="1692" y2="496" stroke="#e62a4a" stroke-width="0.8" />
<line x1="1641.5" y1="530" x2="1692" y2="530" stroke="#e62a4a" stroke-width="0.8" />
<line x1="1641.5" y1="543.9" x2="1692" y2="543.9" stroke="#e62a4a" stroke-width="0.8" />
<line x1="1692" y1="225.6" x2="1767.7" y2="225.6" stroke="#e62a4a" stroke-width="0.8" />
<line x1="1692" y1="238.7" x2="1767.7" y2="238.7" stroke="#e62a4a" stroke-width="0.8" />
<line x1="1692" y1="384.3" x2="1767.7" y2="384.3" stroke="#e62a4a" stroke-width="0.8" />
<line x1="1692" y1="397.4" x2="1767.7" y2="397.4" stroke="#e62a4a" stroke-width="0.8" />
<line x1="1692" y1="543.9" x2="1767.7" y2="543.9" stroke="#e62a4a" stroke-width="0.8" />
<line x1="1689" y1="204" x2="1696" y2="204" stroke="#e62a4a" stroke-width="0.7" />
<line x1="1689" y1="218" x2="1696" y2="218" stroke="#e62a4a" stroke-width="0.7" />
<line x1="1689" y1="232" x2="1696" y2="232" stroke="#e62a4a" stroke-width="0.7" />
<line x1="1689" y1="245" x2="1696" y2="245" stroke="#e62a4a" stroke-width="0.7" />
<line x1="1689" y1="258" x2="1696" y2="258" stroke="#e62a4a" stroke-width="0.7" />
<line x1="1689" y1="272" x2="1696" y2="272" stroke="#e62a4a" stroke-width="0.7" />
<line x1="1689" y1="285" x2="1696" y2="285" stroke="#e62a4a" stroke-width="0.7" />
<line x1="1689" y1="298" x2="1696" y2="298" stroke="#e62a4a" stroke-width="0.7" />
<line x1="1689" y1="312" x2="1696" y2="312" stroke="#e62a4a" stroke-width="0.7" />
<line x1="1689" y1="325" x2="1696" y2="325" stroke="#e62a4a" stroke-width="0.7" />
<line x1="1689" y1="338" x2="1696" y2="338" stroke="#e62a4a" stroke-width="0.7" />
<line x1="1689" y1="352" x2="1696" y2="352" stroke="#e62a4a" stroke-width="0.7" />
<line x1="1689" y1="365" x2="1696" y2="365" stroke="#e62a4a" stroke-width="0.7" />
<line x1="1689" y1="378" x2="1696" y2="378" stroke="#e62a4a" stroke-width="0.7" />
<line x1="1689" y1="392" x2="1696" y2="392" stroke="#e62a4a" stroke-width="0.7" />
<line x1="1689" y1="405" x2="1696" y2="405" stroke="#e62a4a" stroke-width="0.7" />
<line x1="1689" y1="420" x2="1696" y2="420" stroke="#e62a4a" stroke-width="0.7" />
<line x1="1689" y1="436" x2="1696" y2="436" stroke="#e62a4a" stroke-width="0.7" />
<line x1="1689" y1="452" x2="1696" y2="452" stroke="#e62a4a" stroke-width="0.7" />
<line x1="1689" y1="468" x2="1696" y2="468" stroke="#e62a4a" stroke-width="0.7" />
<line x1="1689" y1="484" x2="1696" y2="484" stroke="#e62a4a" stroke-width="0.7" />
<line x1="1689" y1="500" x2="1696" y2="500" stroke="#e62a4a" stroke-width="0.7" />
<line x1="1689" y1="516" x2="1696" y2="516" stroke="#e62a4a" stroke-width="0.7" />
<line x1="1689" y1="532" x2="1696" y2="532" stroke="#e62a4a" stroke-width="0.7" />
<text x="1640" y="205" font-size="4.5" fill="#e62a4a" transform="rotate(-90 1640 205)">1500</text>
<text x="1640" y="223" font-size="4.5" fill="#e62a4a" transform="rotate(-90 1640 223)">500</text>
<text x="1657" y="223" font-size="4.5" fill="#e62a4a" transform="rotate(-90 1657 223)">300</text>
<text x="1640" y="250" font-size="4.5" fill="#e62a4a" transform="rotate(-90 1640 250)">700</text>
<text x="1657" y="250" font-size="4.5" fill="#e62a4a" transform="rotate(-90 1657 250)">500</text>
<text x="1640" y="276" font-size="4.5" fill="#e62a4a" transform="rotate(-90 1640 276)">1700</text>
<text x="1640" y="318" font-size="4.5" fill="#e62a4a" transform="rotate(-90 1640 318)">1500</text>
<text x="1640" y="358" font-size="4.5" fill="#e62a4a" transform="rotate(-90 1640 358)">1500</text>
<text x="1640" y="384" font-size="4.5" fill="#e62a4a" transform="rotate(-90 1640 384)">500</text>
<text x="1657" y="384" font-size="4.5" fill="#e62a4a" transform="rotate(-90 1657 384)">200</text>
<text x="1640" y="410" font-size="4.5" fill="#e62a4a" transform="rotate(-90 1640 410)">700</text>
<text x="1657" y="410" font-size="4.5" fill="#e62a4a" transform="rotate(-90 1657 410)">300</text>
<text x="1640" y="446" font-size="4.5" fill="#e62a4a" transform="rotate(-90 1640 446)">1500</text>
<text x="1640" y="486" font-size="4.5" fill="#e62a4a" transform="rotate(-90 1640 486)">1500</text>
<text x="1640" y="522" font-size="4.5" fill="#e62a4a" transform="rotate(-90 1640 522)">1260</text>
<text x="1640" y="540" font-size="4.5" fill="#e62a4a" transform="rotate(-90 1640 540)">700</text>
<text x="1640" y="566" font-size="4.5" fill="#e62a4a" transform="rotate(-90 1640 566)">1300</text>
<text x="1766" y="235" font-size="4.5" fill="#e62a4a" transform="rotate(-90 1766 235)">700</text>
<text x="1766" y="320" font-size="4.5" fill="#e62a4a" transform="rotate(-90 1766 320)">5591</text>
<text x="1766" y="395" font-size="4.5" fill="#e62a4a" transform="rotate(-90 1766 395)">400</text>
<text x="1766" y="480" font-size="4.5" fill="#e62a4a" transform="rotate(-90 1766 480)">5570</text>
<text x="1598" y="350" font-size="4.5" fill="#111" transform="rotate(-90 1598 350)">Schnitt 2 ø323.9 - 8690</text>
<text x="1598" y="515" font-size="4.5" fill="#111" transform="rotate(-90 1598 515)">Schnitt 1 ø406.4 - 7390</text>
<text x="1705" y="272.0" font-size="4.6" fill="#e62a4a" >4x Bride zu Kabelbaum</text>
<text x="1705" y="277.6" font-size="4.6" fill="#e62a4a" >zu ø323.9</text>
<text x="1705" y="283.2" font-size="4.6" fill="#e62a4a" >4-017164A</text>
<line x1="1705" y1="273" x2="1753.3" y2="273" stroke="#e62a4a" stroke-width="0.5" />
<line x1="1692" y1="255" x2="1705" y2="272" stroke="#e62a4a" stroke-width="0.6" />
<text x="1705" y="316.0" font-size="4.6" fill="#e62a4a" >Kabelbaum</text>
<text x="1705" y="321.6" font-size="4.6" fill="#e62a4a" >P...10 L=5500mm</text>
<text x="1705" y="327.2" font-size="4.6" fill="#e62a4a" >S07_002111</text>
<line x1="1705" y1="317" x2="1725.7" y2="317" stroke="#e62a4a" stroke-width="0.5" />
<line x1="1692" y1="302" x2="1705" y2="316" stroke="#e62a4a" stroke-width="0.6" />
<text x="1705" y="437.0" font-size="4.6" fill="#e62a4a" >4x Bride zu Kabelbaum</text>
<text x="1705" y="442.6" font-size="4.6" fill="#e62a4a" >zu ø406.4</text>
<text x="1705" y="448.2" font-size="4.6" fill="#e62a4a" >s.Pl. N38_009444</text>
<line x1="1705" y1="438" x2="1753.3" y2="438" stroke="#e62a4a" stroke-width="0.5" />
<line x1="1692" y1="423" x2="1705" y2="437" stroke="#e62a4a" stroke-width="0.6" />
<text x="1705" y="460.0" font-size="4.6" fill="#e62a4a" >Kabelbaum</text>
<text x="1705" y="465.6" font-size="4.6" fill="#e62a4a" >P...3 L=5500mm</text>
<text x="1705" y="471.2" font-size="4.6" fill="#e62a4a" >S07_002111</text>
<line x1="1705" y1="461" x2="1725.7" y2="461" stroke="#e62a4a" stroke-width="0.5" />
<line x1="1692" y1="447" x2="1705" y2="460" stroke="#e62a4a" stroke-width="0.6" />
<rect x="1618" y="474" width="122" height="16.5" fill="none" stroke="#333" stroke-width="0.8" />
<line x1="1618" y1="490.5" x2="1618" y2="572" stroke="#555" stroke-width="0.8" />
<line x1="1736.8" y1="490.5" x2="1736.8" y2="572" stroke="#555" stroke-width="0.8" />
<rect x="1698.6" y="513" width="32.4" height="57" fill="none" stroke="#555" stroke-width="0.8" />
<rect x="1701.5" y="516" width="26.5" height="54" fill="none" stroke="#777" stroke-width="0.6" />
<rect x="1636.5" y="498" width="14.2" height="11" fill="#888" stroke="#444" stroke-width="0.6" />
<line x1="1636.5" y1="500.5" x2="1650.7" y2="500.5" stroke="#ddd" stroke-width="0.6" />
<line x1="1636.5" y1="503.5" x2="1650.7" y2="503.5" stroke="#ddd" stroke-width="0.6" />
<line x1="1636.5" y1="506.5" x2="1650.7" y2="506.5" stroke="#ddd" stroke-width="0.6" />
<line x1="1618" y1="513" x2="1618" y2="572" stroke="#1a1a1a" stroke-width="1.8" />
<line x1="1618" y1="572" x2="1673.6" y2="572" stroke="#1a1a1a" stroke-width="1.8" />
<path d="M1591.8 496 L1604 503 L1618 513 Q1624 528 1638 542 L1672.5 568" fill="none" stroke="#333" stroke-width="0.8"/>
<path d="M1648 577 L1662 560 L1672 560" fill="none" stroke="#333" stroke-width="0.8"/>
<line x1="1599.4" y1="575" x2="1738" y2="575" stroke="#333" stroke-width="0.8" />
<rect x="1617" y="577" width="4" height="8" fill="#1a1a1a" stroke="none" stroke-width="0" />
<line x1="1600" y1="580" x2="1645" y2="580" stroke="#888" stroke-width="0.8" />
<path d="M1580 598 L1640 598 L1642 590 L1648 590" fill="none" stroke="#aaa" stroke-width="1.2"/>
<rect x="1649" y="578" width="28" height="27" fill="none" stroke="#555" stroke-width="0.9" />
<rect x="1648" y="604" width="29" height="3" fill="#1a1a1a" stroke="none" stroke-width="0" />
<rect x="1668.5" y="576.6" width="28" height="41.4" fill="none" stroke="#999" stroke-width="0.8" />
<rect x="1668" y="574" width="28" height="3" fill="#1a1a1a" stroke="none" stroke-width="0" />
<rect x="1648.5" y="618" width="69.5" height="24" fill="none" stroke="#999" stroke-width="0.8" />
<path d="M1697 590 L1708 608 L1738 610 V590 Q1740 575 1736 575" fill="none" stroke="#aaa" stroke-width="0.9"/>
<path d="M1730 575 V618 L1750 618 L1788 637.6" fill="none" stroke="#222" stroke-width="0.8"/>
<line x1="1730" y1="598" x2="1740" y2="598" stroke="#333" stroke-width="0.8" />
<line x1="1671" y1="560" x2="1842" y2="489" stroke="#e62a4a" stroke-width="0.8" />
<text x="1908" y="199" font-size="10.5" fill="#111" >Schnitt A-A</text>
<text x="1908" y="205" font-size="4.5" fill="#111" >1:20</text>
<path d="M1956.3 203 A69 69 0 0 1 1958.3 331.4" fill="none" stroke="#e62a4a" stroke-width="0.9"/>
<line x1="1947" y1="228" x2="1956.3" y2="203" stroke="#e62a4a" stroke-width="0.9" />
<circle cx="1932.2" cy="268.2" r="13" fill="none" stroke="#e62a4a" stroke-width="3" stroke-dasharray="1.2 0.8" opacity="0.85"/>
<circle cx="1932.2" cy="268.2" r="5.5" fill="none" stroke="#1a1a1a" stroke-width="1.2"/>
<line x1="1926" y1="268.2" x2="1938.4" y2="268.2" stroke="#1a1a1a" stroke-width="0.8" />
<line x1="1932.2" y1="262" x2="1932.2" y2="274.4" stroke="#1a1a1a" stroke-width="0.8" />
<line x1="1934" y1="272" x2="1956.5" y2="330" stroke="#e62a4a" stroke-width="3.4" stroke-dasharray="1.2 0.7"/>
<rect x="1941" y="297" width="7" height="3" fill="#e62a4a" stroke="none" stroke-width="0" transform="rotate(-22 1944 298)"/>
<circle cx="1956" cy="329" r="1.6" fill="#e62a4a"/>
<path d="M1855 251 L1885 275 L1862 262 Z" fill="#1a1a1a" stroke="#1a1a1a" stroke-width="0.8"/>
<line x1="1858" y1="250" x2="1882" y2="270" stroke="#1a1a1a" stroke-width="0.6" />
<line x1="1855" y1="255" x2="1880" y2="273" stroke="#1a1a1a" stroke-width="0.6" />
<line x1="1856" y1="256" x2="1881" y2="272" stroke="#1a1a1a" stroke-width="0.6" />
<line x1="1926" y1="247.5" x2="1950" y2="256" stroke="#1a1a1a" stroke-width="1.4" />
<line x1="1926" y1="245" x2="1924" y2="252" stroke="#1a1a1a" stroke-width="1" />
<line x1="1950" y1="253" x2="1948" y2="260" stroke="#1a1a1a" stroke-width="1" />
<line x1="1904" y1="262" x2="1925" y2="266" stroke="#1a1a1a" stroke-width="0.7" />
<line x1="1904" y1="258" x2="1925" y2="263" stroke="#1a1a1a" stroke-width="0.7" />
<circle cx="1904" cy="260" r="2.5" fill="none" stroke="#1a1a1a" stroke-width="1.6"/>
<line x1="1893" y1="277" x2="1920" y2="271" stroke="#1a1a1a" stroke-width="0.7" />
<text x="1894" y="276" font-size="4.5" fill="#111" >ø159</text>
<text x="1941" y="248" font-size="4.5" fill="#111" transform="rotate(-90 1941 248)">159°</text>
<text x="1947" y="250" font-size="4.5" fill="#111" transform="rotate(-90 1947 250)">Az:35°</text>
<text x="1951" y="280.0" font-size="4.6" fill="#e62a4a" >8x Kabelbride</text>
<text x="1951" y="285.6" font-size="4.6" fill="#e62a4a" >zu ø159 - Az:40°</text>
<text x="1951" y="291.2" font-size="4.6" fill="#e62a4a" >s.Pl. S19_017077</text>
<line x1="1951" y1="281" x2="1980.9" y2="281" stroke="#e62a4a" stroke-width="0.5" />
<line x1="1940" y1="278" x2="1951" y2="280" stroke="#e62a4a" stroke-width="0.6" />
<text x="2010" y="246" font-size="4.6" fill="#e62a4a" transform="rotate(80 2010 246)">Az:40° (Kabelbaum)</text>
<text x="2004" y="248" font-size="4.6" fill="#e62a4a" transform="rotate(80 2004 248)">zu ø159</text>
<text x="1958" y="336" font-size="4.6" fill="#e62a4a" transform="rotate(62 1958 336)">Az:40° (1°)</text>
<text x="1962" y="334" font-size="4.6" fill="#e62a4a" transform="rotate(62 1962 334)">GPS</text>
<text x="1965" y="332" font-size="4.6" fill="#e62a4a" transform="rotate(62 1965 332)">KATHREIN</text>
<text x="1852" y="407" font-size="10.5" fill="#111" >Kabelaustritt</text>
<text x="1852" y="413.5" font-size="4.5" fill="#111" >1:50</text>
<defs><linearGradient id="grass" x1="0" y1="0" x2="1" y2="1"><stop offset="0" stop-color="#4f7a3a"/><stop offset="0.5" stop-color="#6f9a4c"/><stop offset="1" stop-color="#3c5a2c"/></linearGradient>
<linearGradient id="pole" x1="0" x2="1"><stop offset="0" stop-color="#a8aeb4"/><stop offset="0.5" stop-color="#d8dcdf"/><stop offset="1" stop-color="#9aa0a6"/></linearGradient></defs>
<rect x="1848.4" y="429" width="81.1" height="60.4" fill="#5f8a44"/>
<rect x="1873.9" y="437.9" width="1.1" height="2.6" fill="#6e9a4c"/>
<rect x="1855.9" y="462.7" width="1.4" height="1.2" fill="#56803e"/>
<rect x="1881.2" y="443.0" width="1.8" height="2.7" fill="#56803e"/>
<rect x="1858.3" y="442.0" width="2.2" height="1.1" fill="#6e9a4c"/>
<rect x="1894.3" y="432.1" width="1.1" height="2.7" fill="#7aa656"/>
<rect x="1871.2" y="437.5" width="2.1" height="2.1" fill="#4a7236"/>
<rect x="1901.8" y="435.1" width="2.3" height="1.7" fill="#56803e"/>
<rect x="1891.3" y="432.8" width="2.2" height="2.0" fill="#4a7236"/>
<rect x="1890.1" y="473.9" width="2.2" height="1.9" fill="#86b060"/>
<rect x="1872.0" y="474.9" width="2.6" height="1.2" fill="#6e9a4c"/>
<rect x="1872.0" y="457.7" width="2.5" height="1.6" fill="#3d5e2c"/>
<rect x="1925.1" y="436.0" width="1.3" height="1.7" fill="#86b060"/>
<rect x="1921.4" y="453.4" width="1.2" height="2.1" fill="#6e9a4c"/>
<rect x="1910.1" y="476.3" width="2.4" height="2.2" fill="#3d5e2c"/>
<rect x="1893.8" y="455.4" width="2.9" height="1.9" fill="#4a7236"/>
<rect x="1900.4" y="432.7" width="1.6" height="2.2" fill="#6e9a4c"/>
<rect x="1901.7" y="454.8" width="1.8" height="2.3" fill="#6e9a4c"/>
<rect x="1850.4" y="455.7" width="2.2" height="2.0" fill="#7aa656"/>
<rect x="1865.6" y="445.7" width="1.5" height="1.8" fill="#6e9a4c"/>
<rect x="1916.6" y="433.8" width="1.8" height="1.6" fill="#86b060"/>
<rect x="1859.3" y="454.0" width="1.6" height="1.8" fill="#56803e"/>
<rect x="1876.6" y="480.0" width="1.3" height="1.4" fill="#7aa656"/>
<rect x="1866.7" y="442.6" width="2.7" height="1.4" fill="#86b060"/>
<rect x="1870.6" y="437.6" width="1.7" height="2.1" fill="#56803e"/>
<rect x="1922.9" y="468.9" width="2.9" height="2.3" fill="#56803e"/>
<rect x="1906.3" y="455.5" width="2.6" height="1.8" fill="#6e9a4c"/>
<rect x="1879.7" y="435.2" width="1.8" height="1.4" fill="#6e9a4c"/>
<rect x="1925.4" y="454.5" width="1.7" height="1.1" fill="#4a7236"/>
<rect x="1848.6" y="437.9" width="2.9" height="2.2" fill="#4a7236"/>
<rect x="1854.1" y="441.2" width="1.3" height="1.5" fill="#86b060"/>
<rect x="1875.7" y="450.1" width="1.2" height="2.0" fill="#4a7236"/>
<rect x="1924.9" y="456.8" width="1.2" height="1.2" fill="#3d5e2c"/>
<rect x="1875.3" y="444.4" width="1.3" height="1.0" fill="#6e9a4c"/>
<rect x="1922.8" y="459.6" width="2.4" height="2.8" fill="#7aa656"/>
<rect x="1907.7" y="446.3" width="2.7" height="2.4" fill="#6e9a4c"/>
<rect x="1869.0" y="450.3" width="1.7" height="1.4" fill="#7aa656"/>
<rect x="1890.8" y="458.1" width="1.4" height="2.6" fill="#6e9a4c"/>
<rect x="1925.4" y="478.2" width="2.6" height="2.5" fill="#7aa656"/>
<rect x="1866.3" y="459.0" width="2.5" height="3.0" fill="#3d5e2c"/>
<rect x="1910.2" y="456.4" width="2.4" height="2.9" fill="#7aa656"/>
<rect x="1883.5" y="483.1" width="2.9" height="1.7" fill="#3d5e2c"/>
<rect x="1865.8" y="442.2" width="1.7" height="2.0" fill="#7aa656"/>
<rect x="1925.4" y="464.3" width="2.0" height="2.3" fill="#4a7236"/>
<rect x="1911.0" y="434.1" width="1.2" height="1.8" fill="#6e9a4c"/>
<rect x="1904.1" y="440.7" width="1.9" height="2.3" fill="#7aa656"/>
<rect x="1855.4" y="483.6" width="1.8" height="1.8" fill="#6e9a4c"/>
<rect x="1922.5" y="470.9" width="3.0" height="1.1" fill="#7aa656"/>
<rect x="1894.7" y="456.0" width="1.3" height="2.7" fill="#6e9a4c"/>
<rect x="1925.1" y="467.0" width="1.3" height="2.1" fill="#3d5e2c"/>
<rect x="1850.3" y="475.2" width="2.3" height="2.1" fill="#6e9a4c"/>
<rect x="1921.4" y="454.1" width="2.7" height="1.4" fill="#7aa656"/>
<rect x="1868.2" y="446.0" width="2.5" height="1.7" fill="#7aa656"/>
<rect x="1891.1" y="477.2" width="2.8" height="1.7" fill="#4a7236"/>
<rect x="1884.3" y="462.7" width="1.8" height="2.8" fill="#56803e"/>
<rect x="1887.7" y="459.8" width="2.0" height="2.7" fill="#56803e"/>
<rect x="1909.2" y="464.2" width="1.3" height="1.9" fill="#7aa656"/>
<rect x="1905.2" y="461.2" width="2.4" height="2.1" fill="#3d5e2c"/>
<rect x="1886.2" y="473.8" width="1.1" height="1.4" fill="#56803e"/>
<rect x="1851.9" y="434.8" width="2.1" height="2.5" fill="#86b060"/>
<rect x="1919.8" y="454.7" width="2.9" height="2.2" fill="#56803e"/>
<rect x="1864.2" y="445.1" width="2.1" height="2.0" fill="#56803e"/>
<rect x="1922.0" y="469.4" width="2.8" height="2.8" fill="#3d5e2c"/>
<rect x="1864.4" y="454.9" width="1.2" height="1.9" fill="#86b060"/>
<rect x="1854.3" y="443.0" width="1.4" height="1.6" fill="#4a7236"/>
<rect x="1858.1" y="473.9" width="2.3" height="1.7" fill="#6e9a4c"/>
<rect x="1868.3" y="437.1" width="1.4" height="2.9" fill="#86b060"/>
<rect x="1879.7" y="457.2" width="2.7" height="1.3" fill="#6e9a4c"/>
<rect x="1882.3" y="458.8" width="1.8" height="1.7" fill="#3d5e2c"/>
<rect x="1855.8" y="450.2" width="2.1" height="1.9" fill="#3d5e2c"/>
<rect x="1850.0" y="448.3" width="1.6" height="2.9" fill="#56803e"/>
<rect x="1857.4" y="482.0" width="2.9" height="1.2" fill="#7aa656"/>
<rect x="1869.3" y="431.5" width="1.5" height="1.3" fill="#7aa656"/>
<rect x="1881.5" y="481.6" width="1.8" height="2.1" fill="#3d5e2c"/>
<rect x="1888.8" y="457.6" width="1.2" height="1.1" fill="#3d5e2c"/>
<rect x="1902.3" y="453.7" width="1.5" height="1.0" fill="#4a7236"/>
<rect x="1855.5" y="444.2" width="2.7" height="1.1" fill="#56803e"/>
<rect x="1915.9" y="455.3" width="3.0" height="1.8" fill="#3d5e2c"/>
<rect x="1920.0" y="464.9" width="2.1" height="1.5" fill="#4a7236"/>
<rect x="1857.1" y="438.5" width="1.4" height="2.9" fill="#4a7236"/>
<rect x="1897.6" y="459.7" width="1.6" height="2.0" fill="#7aa656"/>
<rect x="1862.5" y="449.2" width="3.0" height="1.1" fill="#4a7236"/>
<rect x="1850.0" y="458.3" width="2.0" height="1.5" fill="#7aa656"/>
<rect x="1883.5" y="467.1" width="1.9" height="2.0" fill="#6e9a4c"/>
<rect x="1913.7" y="451.8" width="1.6" height="1.4" fill="#56803e"/>
<rect x="1866.5" y="440.6" width="2.5" height="1.3" fill="#6e9a4c"/>
<rect x="1925.8" y="485.7" width="1.0" height="2.3" fill="#7aa656"/>
<rect x="1917.2" y="454.0" width="1.2" height="2.7" fill="#4a7236"/>
<rect x="1916.5" y="467.8" width="2.2" height="2.4" fill="#3d5e2c"/>
<rect x="1852.1" y="439.9" width="1.9" height="1.5" fill="#3d5e2c"/>
<rect x="1923.6" y="485.1" width="1.6" height="1.1" fill="#56803e"/>
<rect x="1917.4" y="441.7" width="1.0" height="1.8" fill="#7aa656"/>
<rect x="1885.6" y="458.1" width="1.5" height="2.6" fill="#7aa656"/>
<rect x="1855.7" y="476.2" width="1.8" height="1.1" fill="#7aa656"/>
<rect x="1850.4" y="446.7" width="1.2" height="2.9" fill="#7aa656"/>
<rect x="1915.2" y="438.1" width="2.6" height="2.2" fill="#6e9a4c"/>
<rect x="1908.2" y="470.6" width="1.3" height="2.4" fill="#86b060"/>
<rect x="1898.8" y="431.7" width="2.8" height="2.3" fill="#6e9a4c"/>
<rect x="1905.8" y="475.9" width="2.8" height="2.5" fill="#7aa656"/>
<rect x="1892.9" y="475.9" width="2.7" height="2.2" fill="#4a7236"/>
<rect x="1918.2" y="468.5" width="2.3" height="1.2" fill="#6e9a4c"/>
<rect x="1851.9" y="465.8" width="1.8" height="1.9" fill="#4a7236"/>
<rect x="1852.6" y="430.3" width="2.4" height="2.0" fill="#56803e"/>
<rect x="1848.9" y="475.1" width="2.9" height="2.8" fill="#6e9a4c"/>
<rect x="1855.8" y="459.4" width="2.5" height="1.5" fill="#6e9a4c"/>
<rect x="1854.4" y="444.5" width="2.5" height="1.5" fill="#6e9a4c"/>
<rect x="1899.3" y="455.7" width="1.2" height="2.8" fill="#86b060"/>
<rect x="1871.0" y="431.9" width="2.3" height="1.2" fill="#6e9a4c"/>
<rect x="1860.1" y="443.8" width="2.4" height="2.2" fill="#6e9a4c"/>
<rect x="1859.0" y="456.9" width="1.5" height="2.3" fill="#86b060"/>
<rect x="1902.6" y="468.1" width="2.4" height="1.6" fill="#3d5e2c"/>
<rect x="1884.9" y="473.3" width="1.4" height="3.0" fill="#56803e"/>
<rect x="1921.6" y="430.2" width="1.2" height="2.0" fill="#86b060"/>
<rect x="1926.2" y="486.4" width="1.4" height="2.9" fill="#86b060"/>
<rect x="1865.0" y="462.6" width="2.5" height="1.5" fill="#7aa656"/>
<rect x="1876.6" y="463.9" width="2.0" height="2.8" fill="#6e9a4c"/>
<rect x="1903.5" y="442.5" width="1.8" height="1.3" fill="#86b060"/>
<rect x="1922.7" y="468.4" width="1.6" height="1.3" fill="#86b060"/>
<rect x="1875.4" y="447.4" width="1.0" height="2.5" fill="#3d5e2c"/>
<rect x="1914.1" y="436.1" width="2.4" height="2.8" fill="#7aa656"/>
<rect x="1871.2" y="450.6" width="1.8" height="2.7" fill="#86b060"/>
<rect x="1854.6" y="482.4" width="2.7" height="1.6" fill="#3d5e2c"/>
<rect x="1852.6" y="467.3" width="2.9" height="1.5" fill="#6e9a4c"/>
<rect x="1869.3" y="458.6" width="2.5" height="2.6" fill="#7aa656"/>
<rect x="1882.0" y="430.9" width="1.8" height="2.8" fill="#6e9a4c"/>
<rect x="1891.8" y="440.9" width="1.1" height="2.5" fill="#4a7236"/>
<rect x="1883.8" y="472.5" width="2.7" height="2.0" fill="#6e9a4c"/>
<rect x="1919.7" y="460.8" width="1.9" height="1.7" fill="#7aa656"/>
<rect x="1871.8" y="471.7" width="1.5" height="2.3" fill="#6e9a4c"/>
<rect x="1872.1" y="461.2" width="1.2" height="2.3" fill="#86b060"/>
<rect x="1854.5" y="458.0" width="2.1" height="1.9" fill="#86b060"/>
<rect x="1874.6" y="472.9" width="1.3" height="1.4" fill="#86b060"/>
<rect x="1855.7" y="448.9" width="1.6" height="1.7" fill="#4a7236"/>
<rect x="1911.7" y="440.8" width="2.5" height="1.8" fill="#4a7236"/>
<rect x="1880.9" y="459.3" width="1.5" height="2.5" fill="#86b060"/>
<rect x="1887.5" y="462.2" width="1.3" height="2.0" fill="#3d5e2c"/>
<rect x="1897.7" y="478.8" width="1.2" height="2.8" fill="#7aa656"/>
<rect x="1878.6" y="466.3" width="2.9" height="2.7" fill="#86b060"/>
<rect x="1916.7" y="430.5" width="1.9" height="2.5" fill="#4a7236"/>
<rect x="1911.3" y="484.9" width="1.0" height="1.8" fill="#86b060"/>
<rect x="1920.9" y="476.7" width="2.9" height="1.5" fill="#86b060"/>
<rect x="1857.1" y="438.1" width="2.9" height="1.2" fill="#56803e"/>
<rect x="1913.0" y="469.5" width="1.2" height="2.6" fill="#86b060"/>
<rect x="1848.7" y="436.4" width="2.8" height="2.3" fill="#56803e"/>
<rect x="1872.3" y="436.6" width="2.1" height="1.9" fill="#3d5e2c"/>
<rect x="1908.2" y="434.9" width="2.0" height="2.2" fill="#3d5e2c"/>
<rect x="1878.9" y="442.1" width="1.0" height="2.1" fill="#56803e"/>
<rect x="1926.3" y="445.2" width="2.3" height="2.8" fill="#3d5e2c"/>
<rect x="1885.7" y="442.7" width="1.1" height="1.8" fill="#7aa656"/>
<rect x="1899.3" y="432.4" width="2.0" height="2.3" fill="#7aa656"/>
<rect x="1881.4" y="444.0" width="1.8" height="1.7" fill="#6e9a4c"/>
<rect x="1887.0" y="469.2" width="1.8" height="2.4" fill="#6e9a4c"/>
<rect x="1864.1" y="475.0" width="2.7" height="1.1" fill="#6e9a4c"/>
<rect x="1887.3" y="440.7" width="1.5" height="1.4" fill="#7aa656"/>
<rect x="1907.9" y="446.2" width="2.0" height="1.4" fill="#56803e"/>
<rect x="1866.0" y="453.2" width="1.1" height="2.2" fill="#6e9a4c"/>
<rect x="1920.5" y="432.3" width="2.9" height="1.3" fill="#4a7236"/>
<rect x="1852.6" y="432.7" width="1.9" height="2.4" fill="#86b060"/>
<rect x="1873.1" y="435.7" width="2.9" height="1.7" fill="#4a7236"/>
<rect x="1863.1" y="483.0" width="1.9" height="1.6" fill="#6e9a4c"/>
<rect x="1905.2" y="477.4" width="1.9" height="1.2" fill="#3d5e2c"/>
<rect x="1854.7" y="433.8" width="2.9" height="1.2" fill="#86b060"/>
<rect x="1923.8" y="441.1" width="2.5" height="1.6" fill="#3d5e2c"/>
<rect x="1911.3" y="434.2" width="1.9" height="1.7" fill="#6e9a4c"/>
<rect x="1920.3" y="440.3" width="2.5" height="1.9" fill="#3d5e2c"/>
<rect x="1897.9" y="443.5" width="2.5" height="1.1" fill="#6e9a4c"/>
<rect x="1851.3" y="432.8" width="1.5" height="2.5" fill="#4a7236"/>
<rect x="1918.7" y="448.7" width="1.7" height="2.9" fill="#3d5e2c"/>
<rect x="1852.0" y="472.1" width="1.6" height="1.6" fill="#6e9a4c"/>
<rect x="1848.9" y="472.7" width="2.9" height="1.1" fill="#6e9a4c"/>
<rect x="1913.0" y="435.4" width="2.9" height="2.9" fill="#6e9a4c"/>
<rect x="1878.7" y="443.6" width="2.6" height="1.3" fill="#86b060"/>
<rect x="1887.3" y="429.7" width="1.6" height="2.4" fill="#6e9a4c"/>
<rect x="1860.4" y="442.8" width="1.9" height="2.6" fill="#3d5e2c"/>
<rect x="1895.1" y="458.6" width="2.5" height="1.5" fill="#86b060"/>
<rect x="1853.6" y="431.1" width="2.1" height="1.3" fill="#56803e"/>
<rect x="1881.9" y="435.3" width="1.5" height="1.2" fill="#4a7236"/>
<rect x="1856.1" y="457.9" width="2.9" height="1.3" fill="#6e9a4c"/>
<rect x="1859.0" y="455.7" width="1.5" height="2.1" fill="#6e9a4c"/>
<rect x="1909.0" y="472.9" width="1.6" height="2.1" fill="#3d5e2c"/>
<rect x="1877.7" y="471.6" width="1.9" height="1.4" fill="#7aa656"/>
<rect x="1867.0" y="445.4" width="1.4" height="1.1" fill="#56803e"/>
<rect x="1868.2" y="443.3" width="1.5" height="2.6" fill="#56803e"/>
<rect x="1899.6" y="486.2" width="1.0" height="2.8" fill="#4a7236"/>
<rect x="1866.6" y="455.0" width="1.1" height="1.6" fill="#3d5e2c"/>
<rect x="1857.9" y="440.1" width="1.4" height="1.2" fill="#56803e"/>
<rect x="1888.6" y="439.4" width="1.5" height="2.6" fill="#56803e"/>
<rect x="1922.4" y="435.3" width="2.4" height="1.7" fill="#56803e"/>
<rect x="1851.5" y="448.8" width="1.4" height="1.5" fill="#4a7236"/>
<rect x="1895.4" y="466.7" width="2.6" height="2.6" fill="#7aa656"/>
<rect x="1880.5" y="450.6" width="1.6" height="1.4" fill="#56803e"/>
<rect x="1910.6" y="460.7" width="1.8" height="2.6" fill="#4a7236"/>
<rect x="1900.4" y="438.1" width="1.2" height="1.3" fill="#56803e"/>
<rect x="1902.8" y="452.8" width="2.3" height="1.8" fill="#3d5e2c"/>
<rect x="1852.6" y="472.1" width="1.8" height="1.0" fill="#3d5e2c"/>
<rect x="1908.4" y="475.3" width="1.4" height="2.5" fill="#6e9a4c"/>
<rect x="1864.5" y="429.5" width="1.8" height="2.6" fill="#7aa656"/>
<rect x="1880.3" y="480.0" width="2.5" height="1.3" fill="#86b060"/>
<rect x="1852.6" y="437.4" width="1.2" height="2.2" fill="#86b060"/>
<rect x="1877.5" y="458.2" width="1.7" height="1.3" fill="#7aa656"/>
<rect x="1862.0" y="433.1" width="2.0" height="2.6" fill="#86b060"/>
<rect x="1924.0" y="440.5" width="2.7" height="1.1" fill="#7aa656"/>
<rect x="1919.8" y="447.3" width="2.9" height="1.8" fill="#56803e"/>
<rect x="1919.1" y="464.9" width="2.3" height="2.7" fill="#7aa656"/>
<rect x="1897.0" y="464.5" width="2.7" height="1.4" fill="#7aa656"/>
<rect x="1865.6" y="452.2" width="1.3" height="1.7" fill="#56803e"/>
<rect x="1860.3" y="485.0" width="1.1" height="2.1" fill="#7aa656"/>
<rect x="1907.7" y="431.4" width="1.2" height="2.2" fill="#3d5e2c"/>
<rect x="1891.5" y="465.3" width="2.3" height="1.6" fill="#3d5e2c"/>
<rect x="1868.0" y="451.6" width="1.9" height="1.9" fill="#3d5e2c"/>
<rect x="1850.4" y="464.8" width="1.9" height="1.9" fill="#86b060"/>
<rect x="1896.8" y="476.3" width="2.6" height="1.8" fill="#7aa656"/>
<rect x="1853.8" y="449.8" width="1.2" height="1.9" fill="#3d5e2c"/>
<rect x="1888.4" y="431.5" width="1.3" height="2.8" fill="#6e9a4c"/>
<rect x="1873.1" y="470.6" width="1.1" height="2.0" fill="#4a7236"/>
<rect x="1878.1" y="483.9" width="1.1" height="1.1" fill="#7aa656"/>
<rect x="1896.5" y="469.0" width="1.4" height="3.0" fill="#4a7236"/>
<rect x="1887.0" y="484.2" width="2.4" height="2.4" fill="#7aa656"/>
<rect x="1865.8" y="477.1" width="2.5" height="1.3" fill="#56803e"/>
<rect x="1918.5" y="445.0" width="1.3" height="2.0" fill="#86b060"/>
<rect x="1920.4" y="441.2" width="2.2" height="1.5" fill="#3d5e2c"/>
<rect x="1877.6" y="440.6" width="1.3" height="2.9" fill="#86b060"/>
<rect x="1901.6" y="480.7" width="2.6" height="1.5" fill="#7aa656"/>
<rect x="1908.5" y="432.0" width="2.9" height="1.9" fill="#3d5e2c"/>
<rect x="1889.3" y="468.8" width="1.5" height="2.1" fill="#4a7236"/>
<rect x="1915.4" y="471.6" width="1.5" height="3.0" fill="#3d5e2c"/>
<rect x="1893.6" y="449.9" width="1.9" height="1.4" fill="#4a7236"/>
<rect x="1906.6" y="432.0" width="1.5" height="2.3" fill="#56803e"/>
<rect x="1925.4" y="462.9" width="2.8" height="2.5" fill="#6e9a4c"/>
<rect x="1906.9" y="441.9" width="2.2" height="1.9" fill="#3d5e2c"/>
<rect x="1888.6" y="480.7" width="2.0" height="2.2" fill="#7aa656"/>
<rect x="1852.2" y="432.3" width="1.7" height="1.2" fill="#56803e"/>
<rect x="1876.5" y="442.1" width="1.6" height="1.3" fill="#56803e"/>
<rect x="1877.2" y="476.8" width="1.3" height="2.9" fill="#7aa656"/>
<rect x="1867.6" y="437.8" width="1.1" height="1.3" fill="#4a7236"/>
<rect x="1900.5" y="444.7" width="2.9" height="1.1" fill="#3d5e2c"/>
<rect x="1912.6" y="480.5" width="2.3" height="1.9" fill="#56803e"/>
<rect x="1921.7" y="471.4" width="1.3" height="1.0" fill="#7aa656"/>
<rect x="1853.4" y="430.7" width="1.5" height="1.1" fill="#7aa656"/>
<rect x="1909.4" y="429.9" width="2.3" height="1.4" fill="#56803e"/>
<rect x="1880.8" y="459.0" width="2.0" height="2.3" fill="#6e9a4c"/>
<rect x="1912.0" y="439.2" width="1.1" height="2.3" fill="#3d5e2c"/>
<rect x="1926.1" y="470.8" width="2.4" height="1.0" fill="#86b060"/>
<rect x="1914.5" y="472.0" width="1.2" height="2.3" fill="#86b060"/>
<rect x="1862.3" y="486.5" width="1.5" height="1.1" fill="#3d5e2c"/>
<rect x="1874.8" y="472.3" width="2.9" height="1.5" fill="#6e9a4c"/>
<rect x="1852.7" y="465.8" width="1.9" height="2.6" fill="#6e9a4c"/>
<rect x="1889.4" y="444.5" width="2.9" height="2.8" fill="#6e9a4c"/>
<rect x="1855.3" y="458.4" width="1.5" height="1.5" fill="#7aa656"/>
<rect x="1906.6" y="483.5" width="2.8" height="1.4" fill="#6e9a4c"/>
<rect x="1878.9" y="463.8" width="2.8" height="2.3" fill="#86b060"/>
<rect x="1902.6" y="467.5" width="1.9" height="2.7" fill="#56803e"/>
<rect x="1903.0" y="478.5" width="2.9" height="1.5" fill="#86b060"/>
<rect x="1917.6" y="474.6" width="2.2" height="1.2" fill="#86b060"/>
<rect x="1919.6" y="437.5" width="1.2" height="2.2" fill="#4a7236"/>
<rect x="1861.2" y="485.4" width="1.1" height="1.1" fill="#6e9a4c"/>
<rect x="1902.6" y="465.6" width="1.1" height="1.1" fill="#6e9a4c"/>
<rect x="1915.4" y="473.0" width="2.6" height="2.6" fill="#7aa656"/>
<rect x="1918.1" y="433.0" width="2.9" height="1.2" fill="#6e9a4c"/>
<rect x="1864.6" y="435.6" width="2.9" height="2.8" fill="#4a7236"/>
<rect x="1907.4" y="434.2" width="2.3" height="2.0" fill="#6e9a4c"/>
<path d="M1912 429 H1929.5 V449 L1922 445 L1912 442 Z" fill="#2d3b26"/>
<path d="M1892 429 H1912 L1914 443 L1900 440 L1892 441 Z" fill="#6a9a48"/>
<path d="M1864 466 Q1868 462 1880 463 L1898 464 L1900 480 Q1890 488 1872 487 Q1864 482 1864 466 Z" fill="#c6c9bd"/>
<path d="M1892 440.9 L1922.5 445 L1929.5 448.2 L1929.5 452 L1902 462.8 L1892 462.8 Z" fill="#b9bec4"/>
<path d="M1900 462 L1920 452 L1929.5 455 L1929.5 486 L1924 488 Z" fill="#c9c4ad"/>
<path d="M1897 464 L1903 462 L1929.5 480 L1929.5 489 L1923 489 Z" fill="#2a3326"/>
<path d="M1905 463 L1909 461 L1929.5 474 L1929.5 480 L1922 478 Z" fill="#e9e9e4"/>
<path d="M1907 467 L1917 463 L1928 471 L1920 476 Z" fill="#1d2233"/>
<rect x="1870.3" y="429" width="21.7" height="43" fill="#c3c8d0"/>
<rect x="1872" y="436" width="18" height="5" fill="#d6dae0"/>
<rect x="1887" y="445" width="1" height="27" fill="#8e949c"/>
<rect x="1848.4" y="429" width="81.1" height="60.4" fill="none" stroke="#222" stroke-width="0.9"/>
<rect x="1893.2" y="448" width="4.8" height="4.5" fill="#e62a4a"/>
<line x1="1897" y1="451.5" x2="1945.6" y2="489.3" stroke="#e62a4a" stroke-width="0.9" />
<text x="1945.6" y="487.0" font-size="5" fill="#e62a4a" >Kabelöffnung am bestehenden</text>
<text x="1945.6" y="493.2" font-size="5" fill="#e62a4a" >Kabelschacht bei nicht Lotrecht gebohrt.</text>
<text x="1945.6" y="499.4" font-size="5" fill="#e62a4a" >Kannten runden und mit Zinkstaubfarbe</text>
<text x="1945.6" y="505.6" font-size="5" fill="#e62a4a" >behandeln. Kabelöffnung beseitz mit</text>
<text x="1945.6" y="511.8" font-size="5" fill="#e62a4a" >Abdeckblech verlegen (gemäss Plan)</text>
<text x="1945.6" y="518.0" font-size="5" fill="#e62a4a" >und abdichten.</text>
<text x="1945.6" y="524.2" font-size="5" fill="#e62a4a" >Plan Abdeckblech S19_017070</text>
<text x="1945.6" y="530.4" font-size="5" fill="#e62a4a" >Kabelhalterungen auf Az:40° montieren.</text>
<line x1="1945.6" y1="488.5" x2="2020" y2="488.5" stroke="#e62a4a" stroke-width="0.5" />
<rect x="1820.2" y="615.4" width="252.4" height="86.8" fill="#fff" stroke="#222" stroke-width="1.1" />
<line x1="1820.2" y1="655.3" x2="2072.6" y2="655.3" stroke="#222" stroke-width="1.1" />
<line x1="1820.2" y1="695.6" x2="2072.6" y2="695.6" stroke="#222" stroke-width="1.1" />
<line x1="1820.2" y1="668.5" x2="1897.8" y2="668.5" stroke="#222" stroke-width="0.7" />
<line x1="1897.8" y1="668.5" x2="1944.6" y2="668.5" stroke="#222" stroke-width="0.7" />
<line x1="2023.4" y1="668.5" x2="2072.6" y2="668.5" stroke="#222" stroke-width="0.7" />
<line x1="1897.8" y1="681.7" x2="2072.6" y2="681.7" stroke="#666" stroke-width="1" />
<line x1="1820.2" y1="688.4" x2="1897.8" y2="688.4" stroke="#222" stroke-width="0.7" />
<line x1="1897.8" y1="688.4" x2="1944.6" y2="688.4" stroke="#222" stroke-width="0.7" />
<line x1="1897.8" y1="615.4" x2="1897.8" y2="695.6" stroke="#222" stroke-width="1" />
<line x1="1960.9" y1="615.4" x2="1960.9" y2="655.3" stroke="#222" stroke-width="1" />
<line x1="1944.6" y1="655.3" x2="1944.6" y2="695.6" stroke="#555" stroke-width="1.1" />
<line x1="2023.4" y1="655.3" x2="2023.4" y2="695.6" stroke="#222" stroke-width="0.9" />
<line x1="1956" y1="681.7" x2="1956" y2="695.6" stroke="#222" stroke-width="0.8" />
<line x1="1971" y1="623" x2="1971" y2="655.3" stroke="#666" stroke-width="0.9" />
<line x1="1985" y1="623" x2="1985" y2="655.3" stroke="#666" stroke-width="0.9" />
<line x1="1998" y1="623" x2="1998" y2="655.3" stroke="#666" stroke-width="0.9" />
<line x1="1960.9" y1="623" x2="2072.6" y2="623" stroke="#aaa" stroke-width="1.2" />
<line x1="1960.9" y1="627" x2="2072.6" y2="627" stroke="#aaa" stroke-width="0.6" />
<text x="1822.5" y="625.5" font-size="9" fill="#6e6e6e" font-weight="bold">HI+PAG</text>
<line x1="1832" y1="621" x2="1894.7" y2="621" stroke="#6a9ad0" stroke-width="1" />
<text x="1823" y="635.0" font-size="3.6" fill="#333" >Hitzmann+Partner AG</text>
<text x="1823" y="639.3" font-size="3.6" fill="#333" >Abt. INFRASTRUKTUR</text>
<text x="1823" y="643.6" font-size="3.6" fill="#333" >Tiefenaustrasse 2</text>
<text x="1823" y="647.9" font-size="3.6" fill="#333" >Postfach 100</text>
<text x="1823" y="652.2" font-size="3.6" fill="#333" >8048 Zürich</text>
<path d="M1899 624.6 H1905.6 V629 Q1905.6 632 1902.3 633 Q1899 632 1899 629 Z" fill="#e62a4a"/>
<rect x="1907" y="625.5" width="18" height="1.4" fill="#222" stroke="none" stroke-width="0" />
<rect x="1907" y="627.5" width="24" height="1.4" fill="#222" stroke="none" stroke-width="0" />
<rect x="1907" y="629.5" width="18" height="1.4" fill="#222" stroke="none" stroke-width="0" />
<rect x="1907" y="631.5" width="24" height="1.4" fill="#222" stroke="none" stroke-width="0" />
<text x="1907" y="638" font-size="2.6" fill="#333" >Eidgenössisches Departement für Verteidigung</text>
<text x="1907" y="641" font-size="2.6" fill="#333" >Bevölkerungsschutz und Sport VBS</text>
<text x="1962" y="621.5" font-size="2.8" fill="#333" >Änderungen</text>
<text x="1962" y="626" font-size="2.8" fill="#333" >Index Datum  Änd-Nr  Änderung</text>
<text x="1963" y="630" font-size="2.8" fill="#333" >a</text>
<text x="1973" y="630" font-size="2.8" fill="#333" >04.2016</text>
<text x="1987" y="630" font-size="2.8" fill="#333" >cvr</text>
<text x="2000" y="630" font-size="2.8" fill="#333" >Neu: Kabelbaum/Halterungen ändern</text>
<text x="1822" y="659" font-size="2.8" fill="#333" >Anlage</text>
<text x="1822" y="665.5" font-size="5" fill="#111" >ARMASUISSE</text>
<text x="1822" y="672" font-size="2.8" fill="#333" >Objekt</text>
<text x="1822" y="678" font-size="5" fill="#111" >INTRAGNA</text>
<text x="1822" y="686" font-size="5" fill="#111" >ISS: BE</text>
<text x="1822" y="693" font-size="2.8" fill="#333" >Referenz</text>
<text x="1904" y="659" font-size="2.8" fill="#333" >Projektnummer</text>
<text x="1909" y="665.5" font-size="5" fill="#111" >INTA_93</text>
<text x="1912" y="672.5" font-size="2.8" fill="#333" >Format</text>
<text x="1906" y="678" font-size="4" fill="#111" >1:50 / 1:20</text>
<text x="1899" y="686.5" font-size="2.8" fill="#333" >Zeichn.    Datum 04.2016</text>
<text x="1899" y="693.5" font-size="2.8" fill="#333" >Kontrolliert     Datum 04.2016</text>
<text x="1946" y="659" font-size="2.8" fill="#333" >Titel</text>
<text x="1946" y="665.5" font-size="5.2" fill="#111" >MONTAGEÜBERSICHT</text>
<text x="1946" y="672.5" font-size="4.6" fill="#111" >1x dB-590 / 1x GPS</text>
<text x="2025" y="659" font-size="2.8" fill="#333" >Massstab</text>
<text x="2025" y="672" font-size="2.8" fill="#333" >Datei</text>
<text x="2025" y="684.5" font-size="2.8" fill="#333" >Zeichnung</text>
<text x="1946" y="685" font-size="2.8" fill="#333" >Format</text>
<text x="1946" y="692" font-size="5" fill="#111" >A3</text>
<text x="1958" y="685" font-size="2.8" fill="#333" >Plannummer</text>
<text x="1958" y="692.5" font-size="5.2" fill="#111" >S19_017368_A</text>
<text x="1822" y="699" font-size="2.4" fill="#333" >Alle Rechte vorbehalten. Ohne schriftliche Genehmigung des Urhebers darf diese Zeichnung weder vervielfältigt noch Dritten zugänglich gemacht werden</text>
<text x="1822" y="701.5" font-size="2.4" fill="#333" >Tous droits réservés. Cette plan ne doit être ni reproduit ni communiqué à des tiers sans autorisation écrite de son auteur.</text>
</svg>
<div class="a" style="left:2064px;top:147px;width:20px;height:32px;background:#d9d9d9;border:1.5px solid #2a6fc8"></div>
<div class="a" style="left:2072px;top:163px;width:4px;height:5px;background:#333"></div>
<!-- clip right side -->
<div class="a" style="left:2076px;top:87px;width:170px;height:1060px;background:#ededed"></div>
<div class="a" style="left:2076px;top:99px;width:1px;height:1048px;background:#d0d0d0"></div>

</body></html>
